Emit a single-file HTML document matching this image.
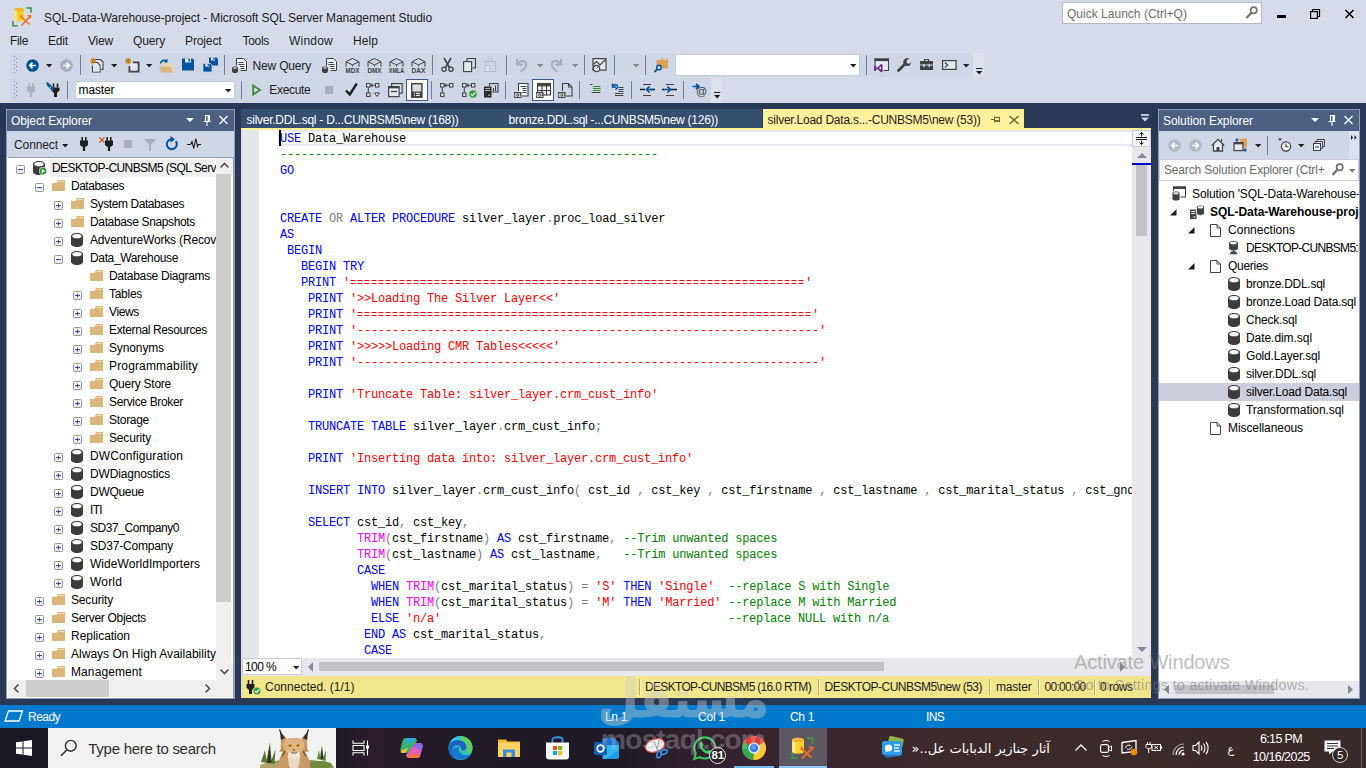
<!DOCTYPE html>
<html lang="en"><head><meta charset="utf-8"><title>SQL-Data-Warehouse-project - Microsoft SQL Server Management Studio</title>
<style>
html,body{margin:0;padding:0;width:1366px;height:768px;overflow:hidden;background:#293955;font-family:'Liberation Sans','DejaVu Sans',sans-serif;font-size:12px;}
.t{position:absolute;white-space:pre;}
#root{position:relative;width:1366px;height:768px;overflow:hidden;}
svg{overflow:visible}
</style></head><body><div id="root">
<div style="position:absolute;left:0px;top:0px;width:1366px;height:103px;background:#D6DBE9;"></div>
<span class="t" style="left:44px;top:10.3px;font-size:12px;line-height:17px;color:#1e1e1e;letter-spacing:-0.089px;">SQL-Data-Warehouse-project - Microsoft SQL Server Management Studio</span>
<div style="position:absolute;left:1062px;top:2px;width:200px;height:22px;background:#fff;border:1px solid #B2B9CD;box-sizing:border-box;"></div>
<span class="t" style="left:1067px;top:6.3px;font-size:12px;line-height:17px;color:#6d6d6d;letter-spacing:0.013px;">Quick Launch (Ctrl+Q)</span>
<span class="t" style="left:10px;top:33.2px;font-size:12px;line-height:17px;color:#1e1e1e;letter-spacing:-0.336px;">File</span>
<span class="t" style="left:48px;top:33.2px;font-size:12px;line-height:17px;color:#1e1e1e;letter-spacing:-0.172px;">Edit</span>
<span class="t" style="left:88px;top:33.2px;font-size:12px;line-height:17px;color:#1e1e1e;letter-spacing:-0.199px;">View</span>
<span class="t" style="left:133px;top:33.2px;font-size:12px;line-height:17px;color:#1e1e1e;letter-spacing:-0.138px;">Query</span>
<span class="t" style="left:185px;top:33.2px;font-size:12px;line-height:17px;color:#1e1e1e;letter-spacing:-0.123px;">Project</span>
<span class="t" style="left:242.5px;top:33.2px;font-size:12px;line-height:17px;color:#1e1e1e;letter-spacing:-0.303px;">Tools</span>
<span class="t" style="left:289px;top:33.2px;font-size:12px;line-height:17px;color:#1e1e1e;letter-spacing:0.219px;">Window</span>
<span class="t" style="left:353px;top:33.2px;font-size:12px;line-height:17px;color:#1e1e1e;letter-spacing:0.078px;">Help</span>
<div style="position:absolute;left:10px;top:53px;width:963px;height:24px;background:#CFD6E5;"></div>
<div style="position:absolute;left:973px;top:53px;width:11px;height:24px;background:#DDE1EC;"></div>
<div style="position:absolute;left:10px;top:78px;width:701px;height:25px;background:#CFD6E5;"></div>
<div style="position:absolute;left:711px;top:78px;width:11px;height:25px;background:#DDE1EC;"></div>
<div style="position:absolute;left:0px;top:103px;width:1366px;height:602px;background:#293955;"></div>
<div style="position:absolute;left:6px;top:109px;width:229px;height:590px;background:#fff;border:1px solid #8E9BBC;box-sizing:border-box;"></div>
<div style="position:absolute;left:7px;top:110px;width:227px;height:21px;background:#4D6082;"></div>
<span class="t" style="left:11px;top:112.8px;font-size:12px;line-height:17px;color:#fff;letter-spacing:-0.114px;">Object Explorer</span>
<div style="position:absolute;left:7px;top:131px;width:227px;height:26px;background:#CFD6E5;"></div>
<span class="t" style="left:14px;top:136.8px;font-size:12px;line-height:17px;color:#1e1e1e;letter-spacing:-0.100px;">Connect</span>
<div style="position:absolute;left:241px;top:128px;width:910px;height:2px;background:#FFF29D;"></div>
<div style="position:absolute;left:241px;top:109px;width:521px;height:19px;background:#364E6F;"></div>
<span class="t" style="left:246.5px;top:111.8px;font-size:12px;line-height:17px;color:#fff;letter-spacing:-0.258px;">silver.DDL.sql - D...CUNBSM5\new (168))</span>
<span class="t" style="left:508.5px;top:111.8px;font-size:12px;line-height:17px;color:#fff;letter-spacing:-0.268px;">bronze.DDL.sql -...CUNBSM5\new (126))</span>
<div style="position:absolute;left:763px;top:109px;width:261px;height:19px;background:#FFF29D;"></div>
<span class="t" style="left:767.5px;top:111.8px;font-size:12px;line-height:17px;color:#1e1e1e;letter-spacing:-0.233px;">silver.Load Data.s...-CUNBSM5\new (53))</span>
<div style="position:absolute;left:241px;top:130px;width:910px;height:568px;background:#fff;"></div>
<div style="position:absolute;left:241px;top:130px;width:1px;height:568px;background:#D3D9E8;"></div>
<div style="position:absolute;left:242px;top:130px;width:17px;height:528px;background:#E6E7E8;"></div>
<div style="position:absolute;left:242px;top:676px;width:909px;height:22px;background:#F0E68C;"></div>
<div style="position:absolute;left:242px;top:658px;width:909px;height:18px;background:#E8E8EC;"></div>
<div style="position:absolute;left:1132px;top:130px;width:19px;height:528px;background:#E8E8EC;"></div>
<div style="position:absolute;left:1158px;top:109px;width:202px;height:590px;background:#fff;border:1px solid #8E9BBC;box-sizing:border-box;"></div>
<div style="position:absolute;left:1159px;top:110px;width:200px;height:21px;background:#4D6082;"></div>
<span class="t" style="left:1163px;top:112.8px;font-size:12px;line-height:17px;color:#fff;letter-spacing:-0.082px;">Solution Explorer</span>
<div style="position:absolute;left:1159px;top:131px;width:200px;height:26px;background:#CFD6E5;"></div>
<div style="position:absolute;left:0px;top:705px;width:1366px;height:23px;background:#007ACC;"></div>
<span class="t" style="left:28px;top:708.8px;font-size:12px;line-height:17px;color:#fff;letter-spacing:-0.537px;">Ready</span>
<span class="t" style="left:605px;top:708.8px;font-size:12px;line-height:17px;color:#fff;letter-spacing:-0.340px;">Ln 1</span>
<span class="t" style="left:698px;top:708.8px;font-size:12px;line-height:17px;color:#fff;letter-spacing:-0.203px;">Col 1</span>
<span class="t" style="left:790px;top:708.8px;font-size:12px;line-height:17px;color:#fff;letter-spacing:-0.340px;">Ch 1</span>
<span class="t" style="left:926px;top:708.8px;font-size:12px;line-height:17px;color:#fff;letter-spacing:-0.672px;">INS</span>
<div style="position:absolute;left:0px;top:728px;width:1366px;height:40px;background:linear-gradient(90deg,#1B1722 0,#1D1824 24%,#2A1C2B 27%,#221A27 33%,#1F1A25 45%,#33212F 52%,#3A2630 58%,#3C2A2C 70%,#3A2A28 85%,#38292A 100%);"></div>
<div style="position:absolute;left:48px;top:728px;width:288px;height:40px;background:#F2F2F2;"></div>
<svg style="position:absolute;left:16px;top:740px;" width="16" height="16" viewBox="0 0 16 16"><path d="M0 2.300l6.500-0.900v6.100h-6.500zM7.500 1.300l8.500-1.300v7.500h-8.500zM0 8.500h6.500v6.100l-6.500-0.900zM7.500 8.500h8.500v7.500l-8.500-1.300z" fill="#fff"/></svg>
<svg style="position:absolute;left:60px;top:739px;" width="18" height="18" viewBox="0 0 18 18"><circle cx="10.800" cy="6.800" r="5.400" fill="none" stroke="#2b2b2b" stroke-width="1.400"/><path d="M7 10.700l-6 6" stroke="#2b2b2b" stroke-width="1.400"/></svg>
<span class="t" style="left:88.3px;top:737.6px;font-size:15px;line-height:21px;color:#2f2f2f;letter-spacing:-0.267px;">Type here to search</span>
<svg style="position:absolute;left:258px;top:729px;" width="78" height="39" viewBox="0 0 78 39"><ellipse cx="39" cy="38.500" rx="37" ry="8" fill="#8C9A50"/><ellipse cx="16" cy="37" rx="14" ry="3.500" fill="#B5A468"/><ellipse cx="62" cy="36" rx="12" ry="4" fill="#6F8A3C"/><path d="M3 33l4-12l1.500 10l3.500-18l1.500 18l4-11l-1 15z" fill="#5C7436"/><path d="M9 34l2.500-17l2 17z" fill="#2F3A22"/><path d="M59 30l2-9l1 7l2-12l1.500 12l2.500-7l-0.500 11z" fill="#66803A"/><path d="M62.500 30l1.200-11l1.800 11z" fill="#2F3A22"/><path d="M21 39c-1-7 1-12 4-15c-2-2-3-6-2-10l-1-12l7 8c3-1.500 11-1.500 14 0l7-8l-1 12c1 4 0 8-2 10c3 3 6 8 5 15z" fill="#C99A66"/><path d="M22 2l1 9l4-2zM50 2l-1 9l-4-2z" fill="#3a2a22"/><path d="M21.500 0.500l1.500 4M50.500 0.500l-1.500 4" stroke="#2a2020" stroke-width="1.200"/><path d="M27 11c3-2.500 15-2.500 18 0c2.500 5 1 10-3 13c-3 2-9 2-12 0c-4-3-5.500-8-3-13z" fill="#DDB582"/><path d="M24 18l-3 5l4-1zM48 18l3 5l-4-1z" fill="#B48552"/><path d="M31 22c2 3 8 3 10 0l1.500 6c-3 3-10 3-13 0z" fill="#F3E7D6"/><path d="M30 28c0 5 1 8 2 11h8c1-3 2-6 2-11c-4 2-8 2-12 0z" fill="#EBD9C2"/><ellipse cx="32" cy="16.500" rx="2" ry="1.200" fill="#D98F1E"/><ellipse cx="40" cy="16.500" rx="2" ry="1.200" fill="#D98F1E"/><circle cx="32" cy="16.500" r="0.700" fill="#222"/><circle cx="40" cy="16.500" r="0.700" fill="#222"/><path d="M34.500 20.500h3l-1.500 1.600z" fill="#5a3a2a"/><path d="M33 23.500c1.500 1 4.500 1 6 0" fill="none" stroke="#5a3a2a" stroke-width="0.700"/><path d="M27 22l-3 5M45 22l3 5" stroke="#8A6038" stroke-width="1.800"/></svg>
<svg style="position:absolute;left:352px;top:740px;" width="17" height="16" viewBox="0 0 17 16"><path d="M1 0.500v2.700h11v-2.700M1 15.500v-2.700h11v2.700" fill="none" stroke="#fff" stroke-width="1.100"/><rect x="1" y="5.500" width="11" height="5" fill="none" stroke="#fff" stroke-width="1.100"/><path d="M15.500 0.500v15" stroke="#fff" stroke-width="1.100"/><rect x="14" y="5.500" width="3" height="3" fill="#fff"/></svg>
<svg style="position:absolute;left:400px;top:737px;" width="23" height="22" viewBox="0 0 23 22"><path d="M5.500 1h8c2 0 3 1 3.500 3l-7 9c-1 2-2 3-4 3h-2.500c-2.500 0-3.500-2-3-4l2-8c0.500-2 1.500-3 3-3z" fill="#38B36B"/><path d="M5.500 1h8c1.500 0 2.500 0.600 3.100 1.800l-11.500 4.500l0.900-3.300c0.500-2 1.500-3 3-3z" fill="#2AA7E8"/><path d="M1.200 13.500l7-2.500l-1.200 2c-1 2-2 3-4 3h-1c-1.200-0.300-1.500-1.300-0.800-2.500z" fill="#F2C12E"/><path d="M17.500 21h-8c-2 0-3-1-3.500-3l7-9c1-2 2-3 4-3h2.500c2.500 0 3.500 2 3 4l-2 8c-0.500 2-1.500 3-3 3z" fill="#E262B7"/><path d="M17 6h2.500c2.500 0 3.500 2 3 4l-1 4l-8.500-5c1-2 2-3 4-3z" fill="#8A6BE8"/><path d="M6.500 19l9-2.500l4.500 2.500c-0.600 1.300-1.500 2-2.500 2h-8c-1.500 0-2.500-0.700-3-2z" fill="#F5793B"/></svg>
<svg style="position:absolute;left:448px;top:736px;" width="25" height="24" viewBox="0 0 25 24"><circle cx="12.500" cy="12" r="12" fill="#35C1B0"/><path d="M12.500 0a12 12 0 0 1 12 12c0 3-2 5-5 5l-3-9l-8-6c1.200-1.300 2.500-2 4-2z" fill="#5FCB63"/><path d="M12.500 0c-4 0-7.500 2-9.800 5l9.800 3z" fill="#35C1F1"/><path d="M0.500 12.500c0-5 4-8.500 9-8.500c5 0 9 3 9 7c0 2-1.500 3.500-3.500 3.500c-1 0-1.500-0.500-1.500-1c0-2-2-4-4.500-4c-3 0-5 2.500-5 5.500c0 4 3.500 8 8 8.500c-6 1.500-11.500-4-11.500-11z" fill="#1B64C4"/><path d="M4 15c0 5 5 9 10.500 8.500c4-0.500 7.500-3 9-6c-2 2-6 2.500-9 1c-3-1.500-4.500-4.500-3.500-7.500c-4 0-7 1.500-7 4z" fill="#1478D4"/></svg>
<svg style="position:absolute;left:498px;top:738px;" width="22" height="19" viewBox="0 0 22 19"><path d="M0 1.500h8l1.500 2h12.500v15.500h-22z" fill="#F3B72F"/><path d="M0 4.500h22v14.500h-22z" fill="#FAD366"/><path d="M5 19v-7.500h12v7.500h-3.500v-4.500h-5v4.500z" fill="#3D8BE0"/></svg>
<svg style="position:absolute;left:546px;top:736px;" width="23" height="24" viewBox="0 0 23 24"><path d="M6.500 7v-3.500c0-3 10-3 10 0v3.500" fill="none" stroke="#2E9BE6" stroke-width="1.800"/><path d="M0 6.500h23v14c0 2-1 3-3 3h-17c-2 0-3-1-3-3z" fill="#F7F7F7"/><rect x="7" y="10" width="4" height="4" fill="#F25022"/><rect x="12" y="10" width="4" height="4" fill="#7FBA00"/><rect x="7" y="15" width="4" height="4" fill="#00A4EF"/><rect x="12" y="15" width="4" height="4" fill="#FFB900"/></svg>
<svg style="position:absolute;left:594px;top:737px;" width="25" height="23" viewBox="0 0 25 23"><path d="M8 2l10-2l7 5v14l-6 3h-11z" fill="#1E6FCC"/><path d="M12 8h13v11c0 2-1 3-3 3h-13z" fill="#35B8F0"/><path d="M12 22l13-9v6c0 2-1 3-3 3z" fill="#1A9CE0"/><rect x="0" y="5" width="13" height="13" rx="1.500" fill="#0F5DB8"/><circle cx="6.500" cy="11.500" r="3.300" fill="none" stroke="#fff" stroke-width="1.800"/></svg>
<svg style="position:absolute;left:645px;top:738px;" width="23" height="21" viewBox="0 0 23 21"><ellipse cx="10" cy="7.500" rx="10" ry="6.500" fill="#F2F2F2" stroke="#D9433A" stroke-width="1.200" transform="rotate(-18 10 7.500)"/><path d="M9 3l4 10M14 2l-2 11" stroke="#9a9a9a" stroke-width="1"/><ellipse cx="14" cy="16.500" rx="2" ry="3.500" fill="none" stroke="#2D8FE8" stroke-width="1.600" transform="rotate(20 14 16.500)"/><ellipse cx="19" cy="14" rx="2" ry="3.500" fill="none" stroke="#2D8FE8" stroke-width="1.600" transform="rotate(70 19 14)"/></svg>
<svg style="position:absolute;left:693px;top:736px;" width="24" height="24" viewBox="0 0 24 24"><path d="M1.200 23l1.600-5.800a10.500 10.500 0 1 1 4 3.900z" fill="none" stroke="#3CCB62" stroke-width="2"/><path d="M7.500 6.500c0.800-0.800 1.800-0.600 2.200 0.300l0.800 1.900c0.200 0.600 0 1-0.400 1.500c-0.500 0.600-0.400 1 0 1.600c0.900 1.300 2 2.200 3.400 2.900c0.500 0.200 0.900 0.200 1.300-0.300c0.500-0.600 1-0.800 1.600-0.500l1.800 0.900c0.800 0.400 0.800 1.300 0.200 2c-1.200 1.400-3 1.500-5 0.700c-3-1.200-5.300-3.500-6.500-6.300c-0.800-1.900-0.600-3.600 0.600-4.700z" fill="#3CCB62"/></svg>
<div style="position:absolute;left:709px;top:747px;width:17px;height:17px;border-radius:50%;background:#2A2326;border:1px solid #E8E8E8;box-sizing:border-box;"></div>
<span class="t" style="left:711.5px;top:747.1px;font-size:11.5px;line-height:16px;color:#fff;letter-spacing:-0.148px;font-weight:700;">81</span>
<svg style="position:absolute;left:742px;top:736px" width="24" height="24" viewBox="-12 -12 24 24"><circle r="12" fill="#E33B2E"/><path d="M0 0L-10.390 -6A12 12 0 0 0 -0.500 12z" fill="#2DA94F"/><path d="M0 0L-0.500 12A12 12 0 0 0 10.390 -6z" fill="#FCC934"/><path d="M0 -6h10.390A12 12 0 0 0 -10.390 -6z" fill="#E33B2E"/><circle r="5.600" fill="#fff"/><circle r="4.400" fill="#3D83F0"/></svg>
<div style="position:absolute;left:734px;top:766px;width:40px;height:2px;background:#76B9ED;"></div>
<div style="position:absolute;left:779px;top:728px;width:48px;height:40px;background:#5C5760;"></div>
<div style="position:absolute;left:779px;top:766px;width:48px;height:2px;background:#8CC4F0;"></div>
<svg style="position:absolute;left:791px;top:737px;" width="23" height="22" viewBox="0 0 23 22"><path d="M1 3c0-1.300 2.700-2.300 6-2.300s6 1 6 2.300v11.500c0 1.300-2.700 2.300-6 2.300s-6-1-6-2.300z" fill="#FAD02C"/><path d="M1 3v11.500c0 0.900 1.500 1.700 3.700 2.100v-12z" fill="#FCE680"/><ellipse cx="7" cy="3.100" rx="6" ry="2.200" fill="#F8B43A"/><path d="M16 1.200h5.500v5.500" fill="none" stroke="#3C9A3C" stroke-width="1.800"/><path d="M1.200 16v5h5.500" fill="none" stroke="#3C9A3C" stroke-width="1.800"/><path d="M10.500 11.500l10 9M21.500 11l-10.500 10.500" stroke="#F26B1D" stroke-width="1.900"/><path d="M9.500 12.500l1.800-3M18 10l4 0.500l-1.800 3" fill="none" stroke="#F26B1D" stroke-width="1.500"/></svg>
<svg style="position:absolute;left:881px;top:735px;" width="24" height="25" viewBox="0 0 24 25"><rect x="7" y="2" width="15" height="13" rx="2" fill="#8DB646" transform="rotate(12 14 8)"/><rect x="3" y="9" width="17" height="13" rx="2" fill="#2B6FC4" transform="rotate(-8 11 15)"/><rect x="1" y="6" width="20" height="14" rx="2.500" fill="#2E9DE8"/><circle cx="7.500" cy="13" r="3.600" fill="#fff"/><path d="M5 15l-0.800 2.500l2.800-1z" fill="#fff"/><path d="M13 10h6M13 13h5M13 16h6" stroke="#DDF1FF" stroke-width="1.300"/></svg>
<span class="t" dir="rtl" style="left:911.500px;top:738.500px;font-size:13px;line-height:20px;color:#fff;font-family:'DejaVu Sans','Liberation Sans',sans-serif;">آثار جنازير الدبابات عل..«</span>
<svg style="position:absolute;left:1075px;top:744px;" width="12" height="7" viewBox="0 0 12 7"><path d="M0.500 6.500l5.500-5.500l5.500 5.500" fill="none" stroke="#fff" stroke-width="1.300"/></svg>
<svg style="position:absolute;left:1100px;top:740px;" width="12" height="17" viewBox="0 0 12 17"><path d="M2.500 1.500c1.500-1.300 5.500-1.300 7 0M2.500 15.500c1.500 1.300 5.500 1.300 7 0" fill="none" stroke="#fff" stroke-width="1"/><rect x="0.600" y="4.600" width="7.800" height="7.800" rx="1.500" fill="none" stroke="#fff" stroke-width="1.100"/><path d="M8.500 7.500l3-1.500v5l-3-1.500" fill="none" stroke="#fff" stroke-width="1"/></svg>
<svg style="position:absolute;left:1121px;top:740px;" width="17" height="16" viewBox="0 0 17 16"><path d="M1 2.500l14-2v11l-14 1.500z" fill="none" stroke="#fff" stroke-width="1.300"/><path d="M4.500 8c0.500-2.500 3-3.500 5-2.500M11 6.500c-0.500 2.500-3 3.500-5 2.500" fill="none" stroke="#fff" stroke-width="1"/><circle cx="13" cy="12" r="3.300" fill="#F08A1C"/></svg>
<svg style="position:absolute;left:1145px;top:742px;" width="17" height="11" viewBox="0 0 17 11"><path d="M2.500 0v2.500M5 0v2.500M1 2.500h5.500v2c0 1.500-1 2.300-2.700 2.300s-2.800-0.800-2.800-2.300zM3.700 7v4" fill="none" stroke="#fff" stroke-width="1"/><rect x="7" y="2.500" width="8.500" height="6" fill="none" stroke="#fff" stroke-width="1"/><path d="M15.500 4.500h1.200v2h-1.200M9.500 4l3.500 3M13 4l-3.500 3" fill="none" stroke="#fff" stroke-width="1"/></svg>
<svg style="position:absolute;left:1172px;top:743px;" width="13" height="13" viewBox="0 0 13 13"><path d="M1 12a11 11 0 0 1 11-11" fill="none" stroke="#9a9090" stroke-width="1.200"/><path d="M4 12a8 8 0 0 1 8-8" fill="none" stroke="#fff" stroke-width="1.200"/><path d="M7 12a5 5 0 0 1 5-5" fill="none" stroke="#fff" stroke-width="1.200"/><circle cx="11" cy="11" r="1.600" fill="#fff"/></svg>
<svg style="position:absolute;left:1192px;top:741px;" width="18" height="14" viewBox="0 0 18 14"><path d="M1 4.500h2.500l3.500-3.500v12l-3.500-3.500h-2.500z" fill="none" stroke="#fff" stroke-width="1.100"/><path d="M9 4.500c1.200 1.500 1.200 3.500 0 5M11.500 2.500c2 2.500 2 6.500 0 9M14 0.800c2.800 3.500 2.800 9 0 12.400" fill="none" stroke="#fff" stroke-width="1.100"/></svg>
<span class="t" style="left:1227.500px;top:741px;font-size:11px;line-height:18px;color:#fff;font-family:'DejaVu Sans',sans-serif;">ع</span>
<span class="t" style="left:1260px;top:730.0px;font-size:12.5px;line-height:18px;color:#fff;letter-spacing:-0.652px;">6:15 PM</span>
<span class="t" style="left:1252.7px;top:748.0px;font-size:12.5px;line-height:18px;color:#fff;letter-spacing:-0.556px;">10/16/2025</span>
<svg style="position:absolute;left:1324px;top:740px;" width="17" height="15" viewBox="0 0 17 15"><path d="M0.500 0.500h16v11h-8l-3.500 3v-3h-4.500z" fill="#fff"/><path d="M3 3.500h11M3 6h11M3 8.500h7" stroke="#3A2A28" stroke-width="1"/></svg>
<div style="position:absolute;left:1332px;top:747px;width:16px;height:16px;border-radius:50%;background:#342728;border:1px solid #CFCFCF;box-sizing:border-box;"></div>
<span class="t" style="left:1337px;top:747.0px;font-size:11.5px;line-height:16px;color:#fff;">5</span>
<div style="position:absolute;left:1361px;top:728px;width:1px;height:40px;background:#6a5c5c;"></div>
<style>.cl{position:absolute;left:21px;height:16px;line-height:16px;white-space:pre;font-family:'Liberation Mono','DejaVu Sans Mono',monospace;font-size:12px;letter-spacing:-0.2px;}.eq{font-size:10px;letter-spacing:1px;position:relative;top:-0.500px}</style>
<div style="position:absolute;left:259px;top:130px;width:873px;height:528px;overflow:hidden;background:#fff;"><div style="position:absolute;left:19px;top:0;width:854px;height:16px;border:2px solid #E8E8F3;box-sizing:border-box;border-right:0"></div><div style="position:absolute;left:0;top:-130px;"><div class="cl" style="top:131px"><span style="color:#0000FF">USE</span><span style="color:#000000"> Data_Warehouse</span></div><div class="cl" style="top:147px"><span style="color:#008000">------------------------------------------------------</span></div><div class="cl" style="top:163px"><span style="color:#0000FF">GO</span></div><div class="cl" style="top:211px"><span style="color:#0000FF">CREATE</span><span style="color:#000000"> </span><span style="color:#808080">OR</span><span style="color:#000000"> </span><span style="color:#0000FF">ALTER</span><span style="color:#000000"> </span><span style="color:#0000FF">PROCEDURE</span><span style="color:#000000"> silver_layer</span><span style="color:#808080">.</span><span style="color:#000000">proc_load_silver</span></div><div class="cl" style="top:227px"><span style="color:#0000FF">AS</span></div><div class="cl" style="top:243px"><span style="color:#0000FF"> BEGIN</span></div><div class="cl" style="top:259px"><span style="color:#0000FF">   BEGIN</span><span style="color:#000000"> </span><span style="color:#0000FF">TRY</span></div><div class="cl" style="top:275px"><span style="color:#0000FF">   PRINT</span><span style="color:#FF0000"> &#x27;<span class="eq">=================================================================</span>&#x27;</span></div><div class="cl" style="top:291px"><span style="color:#0000FF">    PRINT</span><span style="color:#FF0000"> &#x27;&gt;&gt;Loading The Silver Layer&lt;&lt;&#x27;</span></div><div class="cl" style="top:307px"><span style="color:#0000FF">    PRINT</span><span style="color:#FF0000"> &#x27;<span class="eq">=================================================================</span>&#x27;</span></div><div class="cl" style="top:323px"><span style="color:#0000FF">    PRINT</span><span style="color:#FF0000"> &#x27;------------------------------------------------------------------&#x27;</span></div><div class="cl" style="top:339px"><span style="color:#0000FF">    PRINT</span><span style="color:#FF0000"> &#x27;&gt;&gt;&gt;&gt;&gt;Loading CMR Tables&lt;&lt;&lt;&lt;&lt;&#x27;</span></div><div class="cl" style="top:355px"><span style="color:#0000FF">    PRINT</span><span style="color:#FF0000"> &#x27;------------------------------------------------------------------&#x27;</span></div><div class="cl" style="top:387px"><span style="color:#0000FF">    PRINT</span><span style="color:#FF0000"> &#x27;Truncate Table: silver_layer.crm_cust_info&#x27;</span></div><div class="cl" style="top:419px"><span style="color:#0000FF">    TRUNCATE</span><span style="color:#000000"> </span><span style="color:#0000FF">TABLE</span><span style="color:#000000"> silver_layer</span><span style="color:#808080">.</span><span style="color:#000000">crm_cust_info</span><span style="color:#808080">;</span></div><div class="cl" style="top:451px"><span style="color:#0000FF">    PRINT</span><span style="color:#FF0000"> &#x27;Inserting data into: silver_layer.crm_cust_info&#x27;</span></div><div class="cl" style="top:483px"><span style="color:#0000FF">    INSERT</span><span style="color:#000000"> </span><span style="color:#0000FF">INTO</span><span style="color:#000000"> silver_layer</span><span style="color:#808080">.</span><span style="color:#000000">crm_cust_info</span><span style="color:#808080">(</span><span style="color:#000000"> cst_id </span><span style="color:#808080">,</span><span style="color:#000000"> cst_key </span><span style="color:#808080">,</span><span style="color:#000000"> cst_firstname </span><span style="color:#808080">,</span><span style="color:#000000"> cst_lastname </span><span style="color:#808080">,</span><span style="color:#000000"> cst_marital_status </span><span style="color:#808080">,</span><span style="color:#000000"> cst_gndr </span><span style="color:#808080">,</span><span style="color:#000000"> cst_create_date</span><span style="color:#808080">)</span></div><div class="cl" style="top:515px"><span style="color:#0000FF">    SELECT</span><span style="color:#000000"> cst_id</span><span style="color:#808080">,</span><span style="color:#000000"> cst_key</span><span style="color:#808080">,</span></div><div class="cl" style="top:531px"><span style="color:#FF00FF">           TRIM</span><span style="color:#808080">(</span><span style="color:#000000">cst_firstname</span><span style="color:#808080">)</span><span style="color:#000000"> </span><span style="color:#0000FF">AS</span><span style="color:#000000"> cst_firstname</span><span style="color:#808080">,</span><span style="color:#008000"> --Trim unwanted spaces</span></div><div class="cl" style="top:547px"><span style="color:#FF00FF">           TRIM</span><span style="color:#808080">(</span><span style="color:#000000">cst_lastname</span><span style="color:#808080">)</span><span style="color:#000000"> </span><span style="color:#0000FF">AS</span><span style="color:#000000"> cst_lastname</span><span style="color:#808080">,</span><span style="color:#008000">   --Trim unwanted spaces</span></div><div class="cl" style="top:563px"><span style="color:#0000FF">           CASE</span></div><div class="cl" style="top:579px"><span style="color:#0000FF">             WHEN</span><span style="color:#000000"> </span><span style="color:#FF00FF">TRIM</span><span style="color:#808080">(</span><span style="color:#000000">cst_marital_status</span><span style="color:#808080">)</span><span style="color:#000000"> </span><span style="color:#808080">=</span><span style="color:#FF0000"> &#x27;S&#x27;</span><span style="color:#000000"> </span><span style="color:#0000FF">THEN</span><span style="color:#FF0000"> &#x27;Single&#x27;</span><span style="color:#008000">  --replace S with Single</span></div><div class="cl" style="top:595px"><span style="color:#0000FF">             WHEN</span><span style="color:#000000"> </span><span style="color:#FF00FF">TRIM</span><span style="color:#808080">(</span><span style="color:#000000">cst_marital_status</span><span style="color:#808080">)</span><span style="color:#000000"> </span><span style="color:#808080">=</span><span style="color:#FF0000"> &#x27;M&#x27;</span><span style="color:#000000"> </span><span style="color:#0000FF">THEN</span><span style="color:#FF0000"> &#x27;Married&#x27;</span><span style="color:#008000"> --replace M with Married</span></div><div class="cl" style="top:611px"><span style="color:#0000FF">             ELSE</span><span style="color:#FF0000"> &#x27;n/a&#x27;</span><span style="color:#008000">                                         --replace NULL with n/a</span></div><div class="cl" style="top:627px"><span style="color:#0000FF">            END</span><span style="color:#000000"> </span><span style="color:#0000FF">AS</span><span style="color:#000000"> cst_marital_status</span><span style="color:#808080">,</span></div><div class="cl" style="top:643px"><span style="color:#0000FF">            CASE</span></div></div><div style="position:absolute;left:20px;top:0px;width:2px;height:16px;background:#000"></div></div>
<div style="position:absolute;left:8px;top:157px;width:208px;height:523px;background:#fff;"></div>
<div style="position:absolute;left:50px;top:159px;width:165px;height:18px;background:#EFEFEF;"></div>
<div style="position:absolute;left:8px;top:157px;width:208px;height:523px;overflow:hidden;"><svg style="position:absolute;left:8px;top:8px;" width="9" height="9" viewBox="0 0 9 9"><rect x="0.5" y="0.5" width="8" height="8" rx="1" fill="#fdfdfd" stroke="#969696"/><rect x="1" y="5" width="7" height="3" fill="#e9e9ee"/><path d="M2 4.5h5" stroke="#3B4DA0" stroke-width="1"/></svg><svg style="position:absolute;left:25px;top:4px;" width="12" height="14" viewBox="0 0 12 14"><path d="M0 3.2C0 1.4 2.7 0 6 0s6 1.4 6 3.2v7.6C12 12.6 9.3 14 6 14s-6-1.4-6-3.2z" fill="#3C3C3C"/><ellipse cx="6" cy="3.2" rx="4.6" ry="2.1" fill="#fff"/></svg><svg style="position:absolute;left:31px;top:10px;" width="8" height="8" viewBox="0 0 8 8"><circle cx="4" cy="4" r="4" fill="#fff"/><circle cx="4" cy="4" r="3.5" fill="#339933"/><path d="M2.8 2v4l3.4-2z" fill="#fff"/></svg><span class="t" style="left:44px;top:2.8px;font-size:12px;line-height:17px;color:#000;letter-spacing:-0.589px;">DESKTOP-CUNBSM5 (SQL Server 16.0.1000.6 - DESKTOP-CUNBSM5\new)</span><svg style="position:absolute;left:27px;top:26px;" width="9" height="9" viewBox="0 0 9 9"><rect x="0.5" y="0.5" width="8" height="8" rx="1" fill="#fdfdfd" stroke="#969696"/><rect x="1" y="5" width="7" height="3" fill="#e9e9ee"/><path d="M2 4.5h5" stroke="#3B4DA0" stroke-width="1"/></svg><svg style="position:absolute;left:44px;top:23px;" width="13" height="11" viewBox="0 0 13 11"><path d="M0 3h4.5l1.5-3h7v11h-13z" fill="#DCB67A"/><path d="M6.5 1.5h5.5" stroke="#F1DEBB" stroke-width="1"/></svg><span class="t" style="left:63px;top:20.8px;font-size:12px;line-height:17px;color:#000;letter-spacing:-0.486px;">Databases</span><svg style="position:absolute;left:46px;top:44px;" width="9" height="9" viewBox="0 0 9 9"><rect x="0.5" y="0.5" width="8" height="8" rx="1" fill="#fdfdfd" stroke="#969696"/><rect x="1" y="5" width="7" height="3" fill="#e9e9ee"/><path d="M2 4.5h5" stroke="#3B4DA0" stroke-width="1"/><path d="M4.5 2.5v4" stroke="#3B4DA0" stroke-width="1"/></svg><svg style="position:absolute;left:63px;top:41px;" width="13" height="11" viewBox="0 0 13 11"><path d="M0 3h4.5l1.5-3h7v11h-13z" fill="#DCB67A"/><path d="M6.5 1.5h5.5" stroke="#F1DEBB" stroke-width="1"/></svg><span class="t" style="left:82px;top:38.8px;font-size:12px;line-height:17px;color:#000;letter-spacing:-0.420px;">System Databases</span><svg style="position:absolute;left:46px;top:62px;" width="9" height="9" viewBox="0 0 9 9"><rect x="0.5" y="0.5" width="8" height="8" rx="1" fill="#fdfdfd" stroke="#969696"/><rect x="1" y="5" width="7" height="3" fill="#e9e9ee"/><path d="M2 4.5h5" stroke="#3B4DA0" stroke-width="1"/><path d="M4.5 2.5v4" stroke="#3B4DA0" stroke-width="1"/></svg><svg style="position:absolute;left:63px;top:59px;" width="13" height="11" viewBox="0 0 13 11"><path d="M0 3h4.5l1.5-3h7v11h-13z" fill="#DCB67A"/><path d="M6.5 1.5h5.5" stroke="#F1DEBB" stroke-width="1"/></svg><span class="t" style="left:82px;top:56.8px;font-size:12px;line-height:17px;color:#000;letter-spacing:-0.357px;">Database Snapshots</span><svg style="position:absolute;left:46px;top:80px;" width="9" height="9" viewBox="0 0 9 9"><rect x="0.5" y="0.5" width="8" height="8" rx="1" fill="#fdfdfd" stroke="#969696"/><rect x="1" y="5" width="7" height="3" fill="#e9e9ee"/><path d="M2 4.5h5" stroke="#3B4DA0" stroke-width="1"/><path d="M4.5 2.5v4" stroke="#3B4DA0" stroke-width="1"/></svg><svg style="position:absolute;left:63px;top:76px;" width="12" height="14" viewBox="0 0 12 14"><path d="M0 3.2C0 1.4 2.7 0 6 0s6 1.4 6 3.2v7.6C12 12.6 9.3 14 6 14s-6-1.4-6-3.2z" fill="#3C3C3C"/><ellipse cx="6" cy="3.2" rx="4.6" ry="2.1" fill="#fff"/></svg><span class="t" style="left:82px;top:74.8px;font-size:12px;line-height:17px;color:#000;letter-spacing:-0.182px;">AdventureWorks (Recovery Pending)</span><svg style="position:absolute;left:46px;top:98px;" width="9" height="9" viewBox="0 0 9 9"><rect x="0.5" y="0.5" width="8" height="8" rx="1" fill="#fdfdfd" stroke="#969696"/><rect x="1" y="5" width="7" height="3" fill="#e9e9ee"/><path d="M2 4.5h5" stroke="#3B4DA0" stroke-width="1"/></svg><svg style="position:absolute;left:63px;top:94px;" width="12" height="14" viewBox="0 0 12 14"><path d="M0 3.2C0 1.4 2.7 0 6 0s6 1.4 6 3.2v7.6C12 12.6 9.3 14 6 14s-6-1.4-6-3.2z" fill="#3C3C3C"/><ellipse cx="6" cy="3.2" rx="4.6" ry="2.1" fill="#fff"/></svg><span class="t" style="left:82px;top:92.8px;font-size:12px;line-height:17px;color:#000;letter-spacing:-0.354px;">Data_Warehouse</span><svg style="position:absolute;left:82px;top:113px;" width="13" height="11" viewBox="0 0 13 11"><path d="M0 3h4.5l1.5-3h7v11h-13z" fill="#DCB67A"/><path d="M6.5 1.5h5.5" stroke="#F1DEBB" stroke-width="1"/></svg><span class="t" style="left:101px;top:110.8px;font-size:12px;line-height:17px;color:#000;letter-spacing:-0.298px;">Database Diagrams</span><svg style="position:absolute;left:65px;top:134px;" width="9" height="9" viewBox="0 0 9 9"><rect x="0.5" y="0.5" width="8" height="8" rx="1" fill="#fdfdfd" stroke="#969696"/><rect x="1" y="5" width="7" height="3" fill="#e9e9ee"/><path d="M2 4.5h5" stroke="#3B4DA0" stroke-width="1"/><path d="M4.5 2.5v4" stroke="#3B4DA0" stroke-width="1"/></svg><svg style="position:absolute;left:82px;top:131px;" width="13" height="11" viewBox="0 0 13 11"><path d="M0 3h4.5l1.5-3h7v11h-13z" fill="#DCB67A"/><path d="M6.5 1.5h5.5" stroke="#F1DEBB" stroke-width="1"/></svg><span class="t" style="left:101px;top:128.8px;font-size:12px;line-height:17px;color:#000;letter-spacing:-0.281px;">Tables</span><svg style="position:absolute;left:65px;top:152px;" width="9" height="9" viewBox="0 0 9 9"><rect x="0.5" y="0.5" width="8" height="8" rx="1" fill="#fdfdfd" stroke="#969696"/><rect x="1" y="5" width="7" height="3" fill="#e9e9ee"/><path d="M2 4.5h5" stroke="#3B4DA0" stroke-width="1"/><path d="M4.5 2.5v4" stroke="#3B4DA0" stroke-width="1"/></svg><svg style="position:absolute;left:82px;top:149px;" width="13" height="11" viewBox="0 0 13 11"><path d="M0 3h4.5l1.5-3h7v11h-13z" fill="#DCB67A"/><path d="M6.5 1.5h5.5" stroke="#F1DEBB" stroke-width="1"/></svg><span class="t" style="left:101px;top:146.8px;font-size:12px;line-height:17px;color:#000;letter-spacing:-0.359px;">Views</span><svg style="position:absolute;left:65px;top:170px;" width="9" height="9" viewBox="0 0 9 9"><rect x="0.5" y="0.5" width="8" height="8" rx="1" fill="#fdfdfd" stroke="#969696"/><rect x="1" y="5" width="7" height="3" fill="#e9e9ee"/><path d="M2 4.5h5" stroke="#3B4DA0" stroke-width="1"/><path d="M4.5 2.5v4" stroke="#3B4DA0" stroke-width="1"/></svg><svg style="position:absolute;left:82px;top:167px;" width="13" height="11" viewBox="0 0 13 11"><path d="M0 3h4.5l1.5-3h7v11h-13z" fill="#DCB67A"/><path d="M6.5 1.5h5.5" stroke="#F1DEBB" stroke-width="1"/></svg><span class="t" style="left:101px;top:164.8px;font-size:12px;line-height:17px;color:#000;letter-spacing:-0.373px;">External Resources</span><svg style="position:absolute;left:65px;top:188px;" width="9" height="9" viewBox="0 0 9 9"><rect x="0.5" y="0.5" width="8" height="8" rx="1" fill="#fdfdfd" stroke="#969696"/><rect x="1" y="5" width="7" height="3" fill="#e9e9ee"/><path d="M2 4.5h5" stroke="#3B4DA0" stroke-width="1"/><path d="M4.5 2.5v4" stroke="#3B4DA0" stroke-width="1"/></svg><svg style="position:absolute;left:82px;top:185px;" width="13" height="11" viewBox="0 0 13 11"><path d="M0 3h4.5l1.5-3h7v11h-13z" fill="#DCB67A"/><path d="M6.5 1.5h5.5" stroke="#F1DEBB" stroke-width="1"/></svg><span class="t" style="left:101px;top:182.8px;font-size:12px;line-height:17px;color:#000;letter-spacing:-0.129px;">Synonyms</span><svg style="position:absolute;left:65px;top:206px;" width="9" height="9" viewBox="0 0 9 9"><rect x="0.5" y="0.5" width="8" height="8" rx="1" fill="#fdfdfd" stroke="#969696"/><rect x="1" y="5" width="7" height="3" fill="#e9e9ee"/><path d="M2 4.5h5" stroke="#3B4DA0" stroke-width="1"/><path d="M4.5 2.5v4" stroke="#3B4DA0" stroke-width="1"/></svg><svg style="position:absolute;left:82px;top:203px;" width="13" height="11" viewBox="0 0 13 11"><path d="M0 3h4.5l1.5-3h7v11h-13z" fill="#DCB67A"/><path d="M6.5 1.5h5.5" stroke="#F1DEBB" stroke-width="1"/></svg><span class="t" style="left:101px;top:200.8px;font-size:12px;line-height:17px;color:#000;letter-spacing:0.153px;">Programmability</span><svg style="position:absolute;left:65px;top:224px;" width="9" height="9" viewBox="0 0 9 9"><rect x="0.5" y="0.5" width="8" height="8" rx="1" fill="#fdfdfd" stroke="#969696"/><rect x="1" y="5" width="7" height="3" fill="#e9e9ee"/><path d="M2 4.5h5" stroke="#3B4DA0" stroke-width="1"/><path d="M4.5 2.5v4" stroke="#3B4DA0" stroke-width="1"/></svg><svg style="position:absolute;left:82px;top:221px;" width="13" height="11" viewBox="0 0 13 11"><path d="M0 3h4.5l1.5-3h7v11h-13z" fill="#DCB67A"/><path d="M6.5 1.5h5.5" stroke="#F1DEBB" stroke-width="1"/></svg><span class="t" style="left:101px;top:218.8px;font-size:12px;line-height:17px;color:#000;letter-spacing:-0.246px;">Query Store</span><svg style="position:absolute;left:65px;top:242px;" width="9" height="9" viewBox="0 0 9 9"><rect x="0.5" y="0.5" width="8" height="8" rx="1" fill="#fdfdfd" stroke="#969696"/><rect x="1" y="5" width="7" height="3" fill="#e9e9ee"/><path d="M2 4.5h5" stroke="#3B4DA0" stroke-width="1"/><path d="M4.5 2.5v4" stroke="#3B4DA0" stroke-width="1"/></svg><svg style="position:absolute;left:82px;top:239px;" width="13" height="11" viewBox="0 0 13 11"><path d="M0 3h4.5l1.5-3h7v11h-13z" fill="#DCB67A"/><path d="M6.5 1.5h5.5" stroke="#F1DEBB" stroke-width="1"/></svg><span class="t" style="left:101px;top:236.8px;font-size:12px;line-height:17px;color:#000;letter-spacing:-0.336px;">Service Broker</span><svg style="position:absolute;left:65px;top:260px;" width="9" height="9" viewBox="0 0 9 9"><rect x="0.5" y="0.5" width="8" height="8" rx="1" fill="#fdfdfd" stroke="#969696"/><rect x="1" y="5" width="7" height="3" fill="#e9e9ee"/><path d="M2 4.5h5" stroke="#3B4DA0" stroke-width="1"/><path d="M4.5 2.5v4" stroke="#3B4DA0" stroke-width="1"/></svg><svg style="position:absolute;left:82px;top:257px;" width="13" height="11" viewBox="0 0 13 11"><path d="M0 3h4.5l1.5-3h7v11h-13z" fill="#DCB67A"/><path d="M6.5 1.5h5.5" stroke="#F1DEBB" stroke-width="1"/></svg><span class="t" style="left:101px;top:254.8px;font-size:12px;line-height:17px;color:#000;letter-spacing:-0.290px;">Storage</span><svg style="position:absolute;left:65px;top:278px;" width="9" height="9" viewBox="0 0 9 9"><rect x="0.5" y="0.5" width="8" height="8" rx="1" fill="#fdfdfd" stroke="#969696"/><rect x="1" y="5" width="7" height="3" fill="#e9e9ee"/><path d="M2 4.5h5" stroke="#3B4DA0" stroke-width="1"/><path d="M4.5 2.5v4" stroke="#3B4DA0" stroke-width="1"/></svg><svg style="position:absolute;left:82px;top:275px;" width="13" height="11" viewBox="0 0 13 11"><path d="M0 3h4.5l1.5-3h7v11h-13z" fill="#DCB67A"/><path d="M6.5 1.5h5.5" stroke="#F1DEBB" stroke-width="1"/></svg><span class="t" style="left:101px;top:272.8px;font-size:12px;line-height:17px;color:#000;letter-spacing:-0.170px;">Security</span><svg style="position:absolute;left:46px;top:296px;" width="9" height="9" viewBox="0 0 9 9"><rect x="0.5" y="0.5" width="8" height="8" rx="1" fill="#fdfdfd" stroke="#969696"/><rect x="1" y="5" width="7" height="3" fill="#e9e9ee"/><path d="M2 4.5h5" stroke="#3B4DA0" stroke-width="1"/><path d="M4.5 2.5v4" stroke="#3B4DA0" stroke-width="1"/></svg><svg style="position:absolute;left:63px;top:292px;" width="12" height="14" viewBox="0 0 12 14"><path d="M0 3.2C0 1.4 2.7 0 6 0s6 1.4 6 3.2v7.6C12 12.6 9.3 14 6 14s-6-1.4-6-3.2z" fill="#3C3C3C"/><ellipse cx="6" cy="3.2" rx="4.6" ry="2.1" fill="#fff"/></svg><span class="t" style="left:82px;top:290.8px;font-size:12px;line-height:17px;color:#000;letter-spacing:0.108px;">DWConfiguration</span><svg style="position:absolute;left:46px;top:314px;" width="9" height="9" viewBox="0 0 9 9"><rect x="0.5" y="0.5" width="8" height="8" rx="1" fill="#fdfdfd" stroke="#969696"/><rect x="1" y="5" width="7" height="3" fill="#e9e9ee"/><path d="M2 4.5h5" stroke="#3B4DA0" stroke-width="1"/><path d="M4.5 2.5v4" stroke="#3B4DA0" stroke-width="1"/></svg><svg style="position:absolute;left:63px;top:310px;" width="12" height="14" viewBox="0 0 12 14"><path d="M0 3.2C0 1.4 2.7 0 6 0s6 1.4 6 3.2v7.6C12 12.6 9.3 14 6 14s-6-1.4-6-3.2z" fill="#3C3C3C"/><ellipse cx="6" cy="3.2" rx="4.6" ry="2.1" fill="#fff"/></svg><span class="t" style="left:82px;top:308.8px;font-size:12px;line-height:17px;color:#000;letter-spacing:-0.156px;">DWDiagnostics</span><svg style="position:absolute;left:46px;top:332px;" width="9" height="9" viewBox="0 0 9 9"><rect x="0.5" y="0.5" width="8" height="8" rx="1" fill="#fdfdfd" stroke="#969696"/><rect x="1" y="5" width="7" height="3" fill="#e9e9ee"/><path d="M2 4.5h5" stroke="#3B4DA0" stroke-width="1"/><path d="M4.5 2.5v4" stroke="#3B4DA0" stroke-width="1"/></svg><svg style="position:absolute;left:63px;top:328px;" width="12" height="14" viewBox="0 0 12 14"><path d="M0 3.2C0 1.4 2.7 0 6 0s6 1.4 6 3.2v7.6C12 12.6 9.3 14 6 14s-6-1.4-6-3.2z" fill="#3C3C3C"/><ellipse cx="6" cy="3.2" rx="4.6" ry="2.1" fill="#fff"/></svg><span class="t" style="left:82px;top:326.8px;font-size:12px;line-height:17px;color:#000;letter-spacing:-0.290px;">DWQueue</span><svg style="position:absolute;left:46px;top:350px;" width="9" height="9" viewBox="0 0 9 9"><rect x="0.5" y="0.5" width="8" height="8" rx="1" fill="#fdfdfd" stroke="#969696"/><rect x="1" y="5" width="7" height="3" fill="#e9e9ee"/><path d="M2 4.5h5" stroke="#3B4DA0" stroke-width="1"/><path d="M4.5 2.5v4" stroke="#3B4DA0" stroke-width="1"/></svg><svg style="position:absolute;left:63px;top:346px;" width="12" height="14" viewBox="0 0 12 14"><path d="M0 3.2C0 1.4 2.7 0 6 0s6 1.4 6 3.2v7.6C12 12.6 9.3 14 6 14s-6-1.4-6-3.2z" fill="#3C3C3C"/><ellipse cx="6" cy="3.2" rx="4.6" ry="2.1" fill="#fff"/></svg><span class="t" style="left:82px;top:344.8px;font-size:12px;line-height:17px;color:#000;letter-spacing:-0.667px;">ITI</span><svg style="position:absolute;left:46px;top:368px;" width="9" height="9" viewBox="0 0 9 9"><rect x="0.5" y="0.5" width="8" height="8" rx="1" fill="#fdfdfd" stroke="#969696"/><rect x="1" y="5" width="7" height="3" fill="#e9e9ee"/><path d="M2 4.5h5" stroke="#3B4DA0" stroke-width="1"/><path d="M4.5 2.5v4" stroke="#3B4DA0" stroke-width="1"/></svg><svg style="position:absolute;left:63px;top:364px;" width="12" height="14" viewBox="0 0 12 14"><path d="M0 3.2C0 1.4 2.7 0 6 0s6 1.4 6 3.2v7.6C12 12.6 9.3 14 6 14s-6-1.4-6-3.2z" fill="#3C3C3C"/><ellipse cx="6" cy="3.2" rx="4.6" ry="2.1" fill="#fff"/></svg><span class="t" style="left:82px;top:362.8px;font-size:12px;line-height:17px;color:#000;letter-spacing:-0.441px;">SD37_Company0</span><svg style="position:absolute;left:46px;top:386px;" width="9" height="9" viewBox="0 0 9 9"><rect x="0.5" y="0.5" width="8" height="8" rx="1" fill="#fdfdfd" stroke="#969696"/><rect x="1" y="5" width="7" height="3" fill="#e9e9ee"/><path d="M2 4.5h5" stroke="#3B4DA0" stroke-width="1"/><path d="M4.5 2.5v4" stroke="#3B4DA0" stroke-width="1"/></svg><svg style="position:absolute;left:63px;top:382px;" width="12" height="14" viewBox="0 0 12 14"><path d="M0 3.2C0 1.4 2.7 0 6 0s6 1.4 6 3.2v7.6C12 12.6 9.3 14 6 14s-6-1.4-6-3.2z" fill="#3C3C3C"/><ellipse cx="6" cy="3.2" rx="4.6" ry="2.1" fill="#fff"/></svg><span class="t" style="left:82px;top:380.8px;font-size:12px;line-height:17px;color:#000;letter-spacing:-0.198px;">SD37-Company</span><svg style="position:absolute;left:46px;top:404px;" width="9" height="9" viewBox="0 0 9 9"><rect x="0.5" y="0.5" width="8" height="8" rx="1" fill="#fdfdfd" stroke="#969696"/><rect x="1" y="5" width="7" height="3" fill="#e9e9ee"/><path d="M2 4.5h5" stroke="#3B4DA0" stroke-width="1"/><path d="M4.5 2.5v4" stroke="#3B4DA0" stroke-width="1"/></svg><svg style="position:absolute;left:63px;top:400px;" width="12" height="14" viewBox="0 0 12 14"><path d="M0 3.2C0 1.4 2.7 0 6 0s6 1.4 6 3.2v7.6C12 12.6 9.3 14 6 14s-6-1.4-6-3.2z" fill="#3C3C3C"/><ellipse cx="6" cy="3.2" rx="4.6" ry="2.1" fill="#fff"/></svg><span class="t" style="left:82px;top:398.8px;font-size:12px;line-height:17px;color:#000;letter-spacing:0.048px;">WideWorldImporters</span><svg style="position:absolute;left:46px;top:422px;" width="9" height="9" viewBox="0 0 9 9"><rect x="0.5" y="0.5" width="8" height="8" rx="1" fill="#fdfdfd" stroke="#969696"/><rect x="1" y="5" width="7" height="3" fill="#e9e9ee"/><path d="M2 4.5h5" stroke="#3B4DA0" stroke-width="1"/><path d="M4.5 2.5v4" stroke="#3B4DA0" stroke-width="1"/></svg><svg style="position:absolute;left:63px;top:418px;" width="12" height="14" viewBox="0 0 12 14"><path d="M0 3.2C0 1.4 2.7 0 6 0s6 1.4 6 3.2v7.6C12 12.6 9.3 14 6 14s-6-1.4-6-3.2z" fill="#3C3C3C"/><ellipse cx="6" cy="3.2" rx="4.6" ry="2.1" fill="#fff"/></svg><span class="t" style="left:82px;top:416.8px;font-size:12px;line-height:17px;color:#000;letter-spacing:0.175px;">World</span><svg style="position:absolute;left:27px;top:440px;" width="9" height="9" viewBox="0 0 9 9"><rect x="0.5" y="0.5" width="8" height="8" rx="1" fill="#fdfdfd" stroke="#969696"/><rect x="1" y="5" width="7" height="3" fill="#e9e9ee"/><path d="M2 4.5h5" stroke="#3B4DA0" stroke-width="1"/><path d="M4.5 2.5v4" stroke="#3B4DA0" stroke-width="1"/></svg><svg style="position:absolute;left:44px;top:437px;" width="13" height="11" viewBox="0 0 13 11"><path d="M0 3h4.5l1.5-3h7v11h-13z" fill="#DCB67A"/><path d="M6.5 1.5h5.5" stroke="#F1DEBB" stroke-width="1"/></svg><span class="t" style="left:63px;top:434.8px;font-size:12px;line-height:17px;color:#000;letter-spacing:-0.170px;">Security</span><svg style="position:absolute;left:27px;top:458px;" width="9" height="9" viewBox="0 0 9 9"><rect x="0.5" y="0.5" width="8" height="8" rx="1" fill="#fdfdfd" stroke="#969696"/><rect x="1" y="5" width="7" height="3" fill="#e9e9ee"/><path d="M2 4.5h5" stroke="#3B4DA0" stroke-width="1"/><path d="M4.5 2.5v4" stroke="#3B4DA0" stroke-width="1"/></svg><svg style="position:absolute;left:44px;top:455px;" width="13" height="11" viewBox="0 0 13 11"><path d="M0 3h4.5l1.5-3h7v11h-13z" fill="#DCB67A"/><path d="M6.5 1.5h5.5" stroke="#F1DEBB" stroke-width="1"/></svg><span class="t" style="left:63px;top:452.8px;font-size:12px;line-height:17px;color:#000;letter-spacing:-0.311px;">Server Objects</span><svg style="position:absolute;left:27px;top:476px;" width="9" height="9" viewBox="0 0 9 9"><rect x="0.5" y="0.5" width="8" height="8" rx="1" fill="#fdfdfd" stroke="#969696"/><rect x="1" y="5" width="7" height="3" fill="#e9e9ee"/><path d="M2 4.5h5" stroke="#3B4DA0" stroke-width="1"/><path d="M4.5 2.5v4" stroke="#3B4DA0" stroke-width="1"/></svg><svg style="position:absolute;left:44px;top:473px;" width="13" height="11" viewBox="0 0 13 11"><path d="M0 3h4.5l1.5-3h7v11h-13z" fill="#DCB67A"/><path d="M6.5 1.5h5.5" stroke="#F1DEBB" stroke-width="1"/></svg><span class="t" style="left:63px;top:470.8px;font-size:12px;line-height:17px;color:#000;letter-spacing:-0.034px;">Replication</span><svg style="position:absolute;left:27px;top:494px;" width="9" height="9" viewBox="0 0 9 9"><rect x="0.5" y="0.5" width="8" height="8" rx="1" fill="#fdfdfd" stroke="#969696"/><rect x="1" y="5" width="7" height="3" fill="#e9e9ee"/><path d="M2 4.5h5" stroke="#3B4DA0" stroke-width="1"/><path d="M4.5 2.5v4" stroke="#3B4DA0" stroke-width="1"/></svg><svg style="position:absolute;left:44px;top:491px;" width="13" height="11" viewBox="0 0 13 11"><path d="M0 3h4.5l1.5-3h7v11h-13z" fill="#DCB67A"/><path d="M6.5 1.5h5.5" stroke="#F1DEBB" stroke-width="1"/></svg><span class="t" style="left:63px;top:488.8px;font-size:12px;line-height:17px;color:#000;letter-spacing:0.018px;">Always On High Availability Groups</span><svg style="position:absolute;left:27px;top:512px;" width="9" height="9" viewBox="0 0 9 9"><rect x="0.5" y="0.5" width="8" height="8" rx="1" fill="#fdfdfd" stroke="#969696"/><rect x="1" y="5" width="7" height="3" fill="#e9e9ee"/><path d="M2 4.5h5" stroke="#3B4DA0" stroke-width="1"/><path d="M4.5 2.5v4" stroke="#3B4DA0" stroke-width="1"/></svg><svg style="position:absolute;left:44px;top:509px;" width="13" height="11" viewBox="0 0 13 11"><path d="M0 3h4.5l1.5-3h7v11h-13z" fill="#DCB67A"/><path d="M6.5 1.5h5.5" stroke="#F1DEBB" stroke-width="1"/></svg><span class="t" style="left:63px;top:506.8px;font-size:12px;line-height:17px;color:#000;letter-spacing:0.095px;">Management</span></div>
<div style="position:absolute;left:216px;top:157px;width:17px;height:523px;background:#F0F0F0;"></div>
<div style="position:absolute;left:216px;top:174px;width:15px;height:428px;background:#CDCDCD;"></div>
<div style="position:absolute;left:231px;top:174px;width:2px;height:489px;background:#fff;"></div>
<div style="position:absolute;left:233px;top:157px;width:1px;height:541px;background:#9A9FAE;"></div>
<div style="position:absolute;left:8px;top:157px;width:226px;height:1px;background:#9A9FAE;"></div>
<svg style="position:absolute;left:216px;top:157px;" width="17" height="17" viewBox="0 0 17 17"><path d="M4.5 10.5l4-4 4 4" fill="none" stroke="#505050" stroke-width="1.6"/></svg>
<svg style="position:absolute;left:216px;top:663px;" width="17" height="17" viewBox="0 0 17 17"><path d="M4.5 6.5l4 4 4-4" fill="none" stroke="#505050" stroke-width="1.6"/></svg>
<div style="position:absolute;left:8px;top:680px;width:225px;height:17px;background:#F0F0F0;"></div>
<div style="position:absolute;left:26px;top:680px;width:83px;height:17px;background:#CDCDCD;"></div>
<svg style="position:absolute;left:8px;top:680px;" width="17" height="17" viewBox="0 0 17 17"><path d="M10.5 4.5l-4 4 4 4" fill="none" stroke="#505050" stroke-width="1.6"/></svg>
<svg style="position:absolute;left:199px;top:680px;" width="17" height="17" viewBox="0 0 17 17"><path d="M6.5 4.5l4 4-4 4" fill="none" stroke="#505050" stroke-width="1.6"/></svg>
<div style="position:absolute;left:1159px;top:181px;width:200px;height:500px;background:#fff;"></div>
<div style="position:absolute;left:1159px;top:383px;width:200px;height:18px;background:#CCCEDB;"></div>
<div style="position:absolute;left:1159px;top:181px;width:200px;height:498px;overflow:hidden;"><svg style="position:absolute;left:13px;top:5px;" width="15" height="15" viewBox="0 0 15 15"><rect x="1.5" y="1" width="12" height="10" fill="#fff" stroke="#424242"/><rect x="1" y="0.5" width="13" height="2.5" fill="#424242"/><path d="M0 7.2C0 6 1.7 5 4 5s4 1 4 2.200v5.6C8 14 6.300 15 4 15s-4-1-4-2.200z" fill="#424242" stroke="#fff" stroke-width="0.8"/><ellipse cx="4" cy="7.2" rx="2.900" ry="1.200" fill="#d8d8d8"/></svg><span class="t" style="left:33px;top:4.8px;font-size:12px;line-height:17px;color:#000;letter-spacing:-0.113px;">Solution &#x27;SQL-Data-Warehouse-project&#x27; (1 project)</span><svg style="position:absolute;left:11px;top:27.5px;" width="6.5" height="6.5" viewBox="0 0 6.5 6.5"><path d="M6.500 0v6.500h-6.500z" fill="#1e1e1e"/></svg><svg style="position:absolute;left:31px;top:24px;" width="15" height="14" viewBox="0 0 15 14"><rect x="0" y="4.500" width="6.500" height="9.500" fill="#424242"/><path d="M1.200 6.500h4M1.200 8.500h4" stroke="#fff" stroke-width="0.9"/><rect x="3.500" y="11.300" width="1.800" height="1.200" fill="#fff"/><path d="M6.500 2.200C6.500 1 8.200 0 10.500 0s4 1 4 2.200v6c0 1.200-1.700 2.200-4 2.200s-4-1-4-2.200z" fill="#424242" stroke="#fff" stroke-width="0.8"/><ellipse cx="10.500" cy="2.300" rx="2.900" ry="1.300" fill="#fff"/></svg><span class="t" style="left:51px;top:22.8px;font-size:12px;line-height:17px;color:#000;letter-spacing:-0.047px;font-weight:700;">SQL-Data-Warehouse-project</span><svg style="position:absolute;left:29px;top:45.5px;" width="6.5" height="6.5" viewBox="0 0 6.5 6.5"><path d="M6.500 0v6.500h-6.500z" fill="#1e1e1e"/></svg><svg style="position:absolute;left:51px;top:43px;" width="11" height="13" viewBox="0 0 11 13"><path d="M0.5 0.5h6.5l3.5 3.5v8.5h-10z" fill="#fff" stroke="#424242"/><path d="M7 0.5v3.5h3.5" fill="none" stroke="#424242"/></svg><span class="t" style="left:69px;top:40.8px;font-size:12px;line-height:17px;color:#000;letter-spacing:0.026px;">Connections</span><svg style="position:absolute;left:70px;top:60px;" width="9" height="14" viewBox="0 0 9 14"><path d="M0 2C0 0.900 2 0 4.500 0s4.500 0.900 4.500 2v5.500c0 1.100-2 2-4.500 2s-4.500-0.900-4.500-2z" fill="#424242"/><ellipse cx="4.500" cy="2.100" rx="3.300" ry="1.300" fill="#fff"/><path d="M4.500 9v3M1 12.800h7l-1.500-2h-4z" stroke="#424242" fill="#424242" stroke-width="1"/></svg><span class="t" style="left:87px;top:58.8px;font-size:12px;line-height:17px;color:#000;letter-spacing:-0.696px;">DESKTOP-CUNBSM5:DESKTOP-CUNBSM5\new</span><svg style="position:absolute;left:29px;top:81.5px;" width="6.5" height="6.5" viewBox="0 0 6.5 6.5"><path d="M6.500 0v6.500h-6.500z" fill="#1e1e1e"/></svg><svg style="position:absolute;left:51px;top:79px;" width="11" height="13" viewBox="0 0 11 13"><path d="M0.5 0.5h6.5l3.5 3.5v8.5h-10z" fill="#fff" stroke="#424242"/><path d="M7 0.5v3.5h3.5" fill="none" stroke="#424242"/></svg><span class="t" style="left:69px;top:76.8px;font-size:12px;line-height:17px;color:#000;letter-spacing:-0.290px;">Queries</span><svg style="position:absolute;left:69px;top:96px;" width="12" height="14" viewBox="0 0 12 14"><path d="M0 3.2C0 1.4 2.7 0 6 0s6 1.4 6 3.2v7.6C12 12.6 9.3 14 6 14s-6-1.4-6-3.2z" fill="#3C3C3C"/><ellipse cx="6" cy="3.2" rx="4.6" ry="2.1" fill="#fff"/></svg><span class="t" style="left:87px;top:94.8px;font-size:12px;line-height:17px;color:#000;letter-spacing:-0.266px;">bronze.DDL.sql</span><svg style="position:absolute;left:69px;top:114px;" width="12" height="14" viewBox="0 0 12 14"><path d="M0 3.2C0 1.4 2.7 0 6 0s6 1.4 6 3.2v7.6C12 12.6 9.3 14 6 14s-6-1.4-6-3.2z" fill="#3C3C3C"/><ellipse cx="6" cy="3.2" rx="4.6" ry="2.1" fill="#fff"/></svg><span class="t" style="left:87px;top:112.8px;font-size:12px;line-height:17px;color:#000;letter-spacing:-0.204px;">bronze.Load Data.sql</span><svg style="position:absolute;left:69px;top:132px;" width="12" height="14" viewBox="0 0 12 14"><path d="M0 3.2C0 1.4 2.7 0 6 0s6 1.4 6 3.2v7.6C12 12.6 9.3 14 6 14s-6-1.4-6-3.2z" fill="#3C3C3C"/><ellipse cx="6" cy="3.2" rx="4.6" ry="2.1" fill="#fff"/></svg><span class="t" style="left:87px;top:130.8px;font-size:12px;line-height:17px;color:#000;letter-spacing:-0.188px;">Check.sql</span><svg style="position:absolute;left:69px;top:150px;" width="12" height="14" viewBox="0 0 12 14"><path d="M0 3.2C0 1.4 2.7 0 6 0s6 1.4 6 3.2v7.6C12 12.6 9.3 14 6 14s-6-1.4-6-3.2z" fill="#3C3C3C"/><ellipse cx="6" cy="3.2" rx="4.6" ry="2.1" fill="#fff"/></svg><span class="t" style="left:87px;top:148.8px;font-size:12px;line-height:17px;color:#000;letter-spacing:-0.059px;">Date.dim.sql</span><svg style="position:absolute;left:69px;top:168px;" width="12" height="14" viewBox="0 0 12 14"><path d="M0 3.2C0 1.4 2.7 0 6 0s6 1.4 6 3.2v7.6C12 12.6 9.3 14 6 14s-6-1.4-6-3.2z" fill="#3C3C3C"/><ellipse cx="6" cy="3.2" rx="4.6" ry="2.1" fill="#fff"/></svg><span class="t" style="left:87px;top:166.8px;font-size:12px;line-height:17px;color:#000;letter-spacing:-0.194px;">Gold.Layer.sql</span><svg style="position:absolute;left:69px;top:186px;" width="12" height="14" viewBox="0 0 12 14"><path d="M0 3.2C0 1.4 2.7 0 6 0s6 1.4 6 3.2v7.6C12 12.6 9.3 14 6 14s-6-1.4-6-3.2z" fill="#3C3C3C"/><ellipse cx="6" cy="3.2" rx="4.6" ry="2.1" fill="#fff"/></svg><span class="t" style="left:87px;top:184.8px;font-size:12px;line-height:17px;color:#000;letter-spacing:-0.240px;">silver.DDL.sql</span><svg style="position:absolute;left:69px;top:204px;" width="12" height="14" viewBox="0 0 12 14"><path d="M0 3.2C0 1.4 2.7 0 6 0s6 1.4 6 3.2v7.6C12 12.6 9.3 14 6 14s-6-1.4-6-3.2z" fill="#3C3C3C"/><ellipse cx="6" cy="3.2" rx="4.6" ry="2.1" fill="#fff"/></svg><span class="t" style="left:87px;top:202.8px;font-size:12px;line-height:17px;color:#000;letter-spacing:-0.187px;">silver.Load Data.sql</span><svg style="position:absolute;left:69px;top:222px;" width="12" height="14" viewBox="0 0 12 14"><path d="M0 3.2C0 1.4 2.7 0 6 0s6 1.4 6 3.2v7.6C12 12.6 9.3 14 6 14s-6-1.4-6-3.2z" fill="#3C3C3C"/><ellipse cx="6" cy="3.2" rx="4.6" ry="2.1" fill="#fff"/></svg><span class="t" style="left:87px;top:220.8px;font-size:12px;line-height:17px;color:#000;letter-spacing:-0.052px;">Transformation.sql</span><svg style="position:absolute;left:51px;top:241px;" width="11" height="13" viewBox="0 0 11 13"><path d="M0.5 0.5h6.5l3.5 3.5v8.5h-10z" fill="#fff" stroke="#424242"/><path d="M7 0.5v3.5h3.5" fill="none" stroke="#424242"/></svg><span class="t" style="left:69px;top:238.8px;font-size:12px;line-height:17px;color:#000;letter-spacing:-0.081px;">Miscellaneous</span></div>
<div style="position:absolute;left:1159px;top:681px;width:200px;height:17px;background:#E8E8EC;"></div>
<div style="position:absolute;left:1175px;top:685px;width:99px;height:9px;background:#C2C3C9;"></div>
<svg style="position:absolute;left:1158px;top:681px;" width="17" height="18" viewBox="0 0 17 18"><path d="M11 4v9l-5-4.500z" fill="#868999"/></svg>
<svg style="position:absolute;left:1342px;top:681px;" width="17" height="18" viewBox="0 0 17 18"><path d="M6 4v9l5-4.500z" fill="#868999"/></svg>
<div style="position:absolute;left:1159px;top:159px;width:200px;height:22px;background:#fff;border:1px solid #CCCEDB;box-sizing:border-box;"></div>
<span class="t" style="left:1164px;top:161.8px;font-size:12px;line-height:17px;color:#6a6a6a;letter-spacing:-0.169px;">Search Solution Explorer (Ctrl+</span>
<div style="position:absolute;left:1159px;top:131px;width:200px;height:28px;background:#CFD6E5;"></div>
<svg style="position:absolute;left:13.5px;top:56px;" width="4" height="18" viewBox="0 0 4 18"><rect x="0" y="0" width="1" height="1" fill="#7B86A3"/><rect x="2" y="2" width="1" height="1" fill="#7B86A3"/><rect x="0" y="4" width="1" height="1" fill="#7B86A3"/><rect x="2" y="6" width="1" height="1" fill="#7B86A3"/><rect x="0" y="8" width="1" height="1" fill="#7B86A3"/><rect x="2" y="10" width="1" height="1" fill="#7B86A3"/><rect x="0" y="12" width="1" height="1" fill="#7B86A3"/><rect x="2" y="14" width="1" height="1" fill="#7B86A3"/><rect x="0" y="16" width="1" height="1" fill="#7B86A3"/></svg>
<svg style="position:absolute;left:13.5px;top:81px;" width="4" height="18" viewBox="0 0 4 18"><rect x="0" y="0" width="1" height="1" fill="#7B86A3"/><rect x="2" y="2" width="1" height="1" fill="#7B86A3"/><rect x="0" y="4" width="1" height="1" fill="#7B86A3"/><rect x="2" y="6" width="1" height="1" fill="#7B86A3"/><rect x="0" y="8" width="1" height="1" fill="#7B86A3"/><rect x="2" y="10" width="1" height="1" fill="#7B86A3"/><rect x="0" y="12" width="1" height="1" fill="#7B86A3"/><rect x="2" y="14" width="1" height="1" fill="#7B86A3"/><rect x="0" y="16" width="1" height="1" fill="#7B86A3"/></svg>
<svg style="position:absolute;left:25.5px;top:58.5px;" width="13" height="13" viewBox="0 0 13 13"><circle cx="6.500" cy="6.500" r="6.300" fill="#00539C"/><path d="M9.800 6.500H4M6.500 3.700L3.700 6.500l2.800 2.800" fill="none" stroke="#fff" stroke-width="1.700"/></svg>
<svg style="position:absolute;left:45.8px;top:63.5px;" width="6.4" height="3.4" viewBox="0 0 6.4 3.4"><path d="M0 0h6.400l-3.200 3.400z" fill="#1e1e1e"/></svg>
<svg style="position:absolute;left:59.5px;top:58.5px;" width="13" height="13" viewBox="0 0 13 13"><circle cx="6.500" cy="6.500" r="6.300" fill="#A7AEBF"/><path d="M3.200 6.500H9M6.500 3.700L9.300 6.500l-2.800 2.800" fill="none" stroke="#fff" stroke-width="1.700"/></svg>
<div style="position:absolute;left:80px;top:55px;width:1px;height:20px;background:#737E99;"></div>
<svg style="position:absolute;left:90px;top:57px;" width="14" height="16" viewBox="0 0 14 16"><path d="M0.10 4.00L6.50 4.00M1.04 1.74L5.56 6.26M3.30 0.80L3.30 7.20M5.56 1.74L1.04 6.26" stroke="#C27D1A" stroke-width="1.100"/><circle cx="3.3" cy="4" r="1.300" fill="#C27D1A"/><path d="M5.500 2.500h5l2.500 2.500v7.500h-2M2.500 8.500v6.500h7.500v-7l-2.500-2.500h-2.500" fill="#E4E6F0" stroke="#424242" stroke-width="1.100"/><path d="M3 9.500v5h6.500v-6h-2.500v-2h-1" fill="#E4E6F0"/></svg>
<svg style="position:absolute;left:110.8px;top:63.5px;" width="6.4" height="3.4" viewBox="0 0 6.4 3.4"><path d="M0 0h6.400l-3.200 3.400z" fill="#1e1e1e"/></svg>
<svg style="position:absolute;left:125px;top:57px;" width="15" height="16" viewBox="0 0 15 16"><path d="M0.10 4.00L6.50 4.00M1.04 1.74L5.56 6.26M3.30 0.80L3.30 7.20M5.56 1.74L1.04 6.26" stroke="#C27D1A" stroke-width="1.100"/><circle cx="3.3" cy="4" r="1.300" fill="#C27D1A"/><path d="M4.500 9v5.500h9v-9h-5.500" fill="none" stroke="#424242" stroke-width="2"/><rect x="5.500" y="6.500" width="7" height="7" fill="#E4E6F0"/></svg>
<svg style="position:absolute;left:145.8px;top:63.5px;" width="6.4" height="3.4" viewBox="0 0 6.4 3.4"><path d="M0 0h6.400l-3.200 3.400z" fill="#1e1e1e"/></svg>
<svg style="position:absolute;left:158px;top:57px;" width="16" height="16" viewBox="0 0 16 16"><path d="M5 5.500h4.500l1.500 1.500h4v8h-10z" fill="#E8D4AE"/><path d="M1 9.500h11l3 6h-11.500z" fill="#DCB67A"/><path d="M2.500 6.500c0.500-3 3.500-4 6-2.500" fill="none" stroke="#00539C" stroke-width="1.500"/><path d="M9.500 1.500v4h-4z" fill="#00539C"/></svg>
<svg style="position:absolute;left:182px;top:58px;" width="12" height="13" viewBox="0 0 12 13"><path d="M0 0.500h10.500l1.500 1.500v10.500h-12z" fill="#00539C"/><rect x="3" y="0.500" width="6" height="4" fill="#E4E6F0"/><rect x="6.500" y="1" width="1.500" height="2.600" fill="#00539C"/></svg>
<svg style="position:absolute;left:203px;top:57px;" width="15" height="15" viewBox="0 0 15 15"><path d="M6 0.500h7.500l1.500 1.500v6.500h-9z" fill="#00539C"/><rect x="8" y="0.500" width="4" height="3" fill="#E4E6F0"/><rect x="10.300" y="0.900" width="1.200" height="2" fill="#00539C"/><path d="M0 6.500h7.500l1.500 1.500v7h-9z" fill="#00539C" stroke="#CFD6E5" stroke-width="0.800"/><rect x="2.300" y="6.800" width="4" height="2.800" fill="#E4E6F0"/><rect x="4.600" y="7" width="1.200" height="2" fill="#00539C"/></svg>
<div style="position:absolute;left:224px;top:55px;width:1px;height:20px;background:#737E99;"></div>
<svg style="position:absolute;left:232px;top:58px;" width="15" height="15" viewBox="0 0 15 15"><path d="M4.500 0.500h7l3 3v9h-6" fill="#F4F5FA" stroke="#424242" stroke-width="1"/><path d="M4.500 0.500v7" stroke="#424242"/><path d="M6.500 4.500h5M6.500 6.500h6M8 8.500h4.500M8.500 10.500h4" stroke="#424242" stroke-width="1"/><path d="M0 10c0-0.800 1.300-1.500 3-1.500s3 0.700 3 1.500v3.500c0 0.800-1.300 1.500-3 1.500s-3-0.700-3-1.500z" fill="#424242"/><ellipse cx="3" cy="10" rx="2.100" ry="0.800" fill="#d0d0d0"/></svg>
<span class="t" style="left:252.5px;top:58.2px;font-size:12px;line-height:17px;color:#1e1e1e;letter-spacing:-0.170px;">New Query</span>
<svg style="position:absolute;left:322px;top:58px;" width="15" height="15" viewBox="0 0 15 15"><path d="M4.500 0.500h7l3 3v9h-6" fill="#F4F5FA" stroke="#424242" stroke-width="1"/><path d="M4.500 0.500v7" stroke="#424242"/><path d="M6.500 4.500h5M6.500 6.500h6M8 8.500h4.500M8.500 10.500h4" stroke="#424242" stroke-width="1"/><path d="M0 10c0-0.800 1.300-1.500 3-1.500s3 0.700 3 1.500v3.500c0 0.800-1.300 1.500-3 1.500s-3-0.700-3-1.500z" fill="#424242"/><ellipse cx="3" cy="10" rx="2.100" ry="0.800" fill="#d0d0d0"/></svg>
<svg style="position:absolute;left:344.5px;top:57.5px;" width="15" height="15" viewBox="0 0 15 15"><path d="M7.500 0.500l6.500 3.200v5M7.500 0.500l-6.500 3.200v5M1 3.700l6.500 3.200l6.500-3.200M7.500 6.900v1.600" fill="none" stroke="#424242" stroke-width="1"/><text x="7.500" y="14.600" text-anchor="middle" font-family="Liberation Sans,sans-serif" font-weight="700" font-size="7" textLength="14" lengthAdjust="spacingAndGlyphs" fill="#424242">MDX</text></svg>
<svg style="position:absolute;left:366.5px;top:57.5px;" width="15" height="15" viewBox="0 0 15 15"><path d="M7.500 0.500l6.500 3.200v5M7.500 0.500l-6.500 3.200v5M1 3.700l6.500 3.200l6.500-3.200M7.500 6.900v1.600" fill="none" stroke="#424242" stroke-width="1"/><text x="7.500" y="14.600" text-anchor="middle" font-family="Liberation Sans,sans-serif" font-weight="700" font-size="7" textLength="14" lengthAdjust="spacingAndGlyphs" fill="#424242">DMX</text></svg>
<svg style="position:absolute;left:389px;top:57.5px;" width="15" height="15" viewBox="0 0 15 15"><path d="M7.500 0.500l6.500 3.200v5M7.500 0.500l-6.500 3.200v5M1 3.700l6.500 3.200l6.500-3.200M7.500 6.900v1.600" fill="none" stroke="#424242" stroke-width="1"/><text x="7.500" y="14.600" text-anchor="middle" font-family="Liberation Sans,sans-serif" font-weight="700" font-size="7" textLength="15.5" lengthAdjust="spacingAndGlyphs" fill="#424242">XMLA</text></svg>
<svg style="position:absolute;left:411px;top:57.5px;" width="15" height="15" viewBox="0 0 15 15"><path d="M7.500 0.500l6.500 3.200v5M7.500 0.500l-6.500 3.200v5M1 3.700l6.500 3.200l6.500-3.200M7.500 6.900v1.600" fill="none" stroke="#424242" stroke-width="1"/><text x="7.500" y="14.600" text-anchor="middle" font-family="Liberation Sans,sans-serif" font-weight="700" font-size="7" textLength="14" lengthAdjust="spacingAndGlyphs" fill="#424242">DAX</text></svg>
<div style="position:absolute;left:432px;top:55px;width:1px;height:20px;background:#737E99;"></div>
<svg style="position:absolute;left:441px;top:58px;" width="13" height="14" viewBox="0 0 13 14"><path d="M3 0l5.500 9.500M10 0l-5.500 9.500" stroke="#424242" stroke-width="1.500"/><circle cx="3" cy="11.300" r="2.100" fill="none" stroke="#424242" stroke-width="1.300"/><circle cx="10" cy="11.300" r="2.100" fill="none" stroke="#424242" stroke-width="1.300"/></svg>
<svg style="position:absolute;left:463px;top:58px;" width="13" height="14" viewBox="0 0 13 14"><path d="M4 3.500v-3h8.500v9.500h-3" fill="none" stroke="#424242" stroke-width="1.100"/><rect x="0.600" y="3.600" width="8" height="10" fill="#E4E6F0" stroke="#424242" stroke-width="1.100"/></svg>
<svg style="position:absolute;left:484px;top:58px;" width="13" height="14" viewBox="0 0 13 14"><path d="M4 3v-1.500c0-2 4-2 4 0v1.500M1.500 3.500h10v10h-10z" fill="none" stroke="#B9BECC" stroke-width="1.100"/><rect x="1" y="7.500" width="5" height="6" fill="#DDE1EC" stroke="#B9BECC"/></svg>
<div style="position:absolute;left:506px;top:55px;width:1px;height:20px;background:#737E99;"></div>
<svg style="position:absolute;left:515px;top:58px;" width="13" height="14" viewBox="0 0 13 14"><path d="M2 1v5.500h5.500M2.500 6c3-5 9.500-3.500 8.500 1.500c-0.500 2.500-3 4.500-5.500 6" fill="none" stroke="#A7AEBF" stroke-width="2"/></svg>
<svg style="position:absolute;left:536.8px;top:63.5px;" width="6.4" height="3.4" viewBox="0 0 6.4 3.4"><path d="M0 0h6.400l-3.200 3.400z" fill="#8A8782"/></svg>
<svg style="position:absolute;left:550px;top:58px;" width="13" height="14" viewBox="0 0 13 14"><path d="M11 1v5.500h-5.500M10.500 6c-3-5-9.500-3.500-8.500 1.500c0.500 2.500 3 4.500 5.500 6" fill="none" stroke="#A7AEBF" stroke-width="2"/></svg>
<svg style="position:absolute;left:571.8px;top:63.5px;" width="6.4" height="3.4" viewBox="0 0 6.4 3.4"><path d="M0 0h6.400l-3.200 3.400z" fill="#8A8782"/></svg>
<div style="position:absolute;left:584px;top:55px;width:1px;height:20px;background:#737E99;"></div>
<svg style="position:absolute;left:592px;top:58px;" width="15" height="14" viewBox="0 0 15 14"><rect x="1" y="0.600" width="13" height="11.500" fill="#E4E6F0" stroke="#424242" stroke-width="1.200"/><path d="M1.500 6.500l3-3l3.500 3.500l5.500-5.500" fill="none" stroke="#424242" stroke-width="1.100"/><circle cx="4.500" cy="10.500" r="3.200" fill="#E4E6F0" stroke="#424242" stroke-width="1.200"/><path d="M4.500 10.500l1.800-1.800" stroke="#424242"/></svg>
<div style="position:absolute;left:614px;top:55px;width:1px;height:20px;background:#737E99;"></div>
<svg style="position:absolute;left:632.8px;top:63.5px;" width="6.4" height="3.4" viewBox="0 0 6.4 3.4"><path d="M0 0h6.400l-3.200 3.400z" fill="#8A8782"/></svg>
<div style="position:absolute;left:645px;top:55px;width:1px;height:20px;background:#737E99;"></div>
<svg style="position:absolute;left:654px;top:58px;" width="15" height="15" viewBox="0 0 15 15"><path d="M2.500 2h4l1-1.500h6.500v10h-11.500z" fill="#DDA258"/><path d="M8.500 1.500h4.500" stroke="#F3D9B3"/><circle cx="5" cy="9.500" r="2.300" fill="#CFD6E5" stroke="#00539C" stroke-width="1.400"/><path d="M3.300 11.200l-2.800 2.800" stroke="#00539C" stroke-width="1.800"/></svg>
<div style="position:absolute;left:675px;top:54px;width:185px;height:22px;background:#fff;border:1px solid #C4CBDD;box-sizing:border-box;"></div>
<svg style="position:absolute;left:849.8px;top:63.5px;" width="6.4" height="3.4" viewBox="0 0 6.4 3.4"><path d="M0 0h6.400l-3.200 3.400z" fill="#1e1e1e"/></svg>
<div style="position:absolute;left:866px;top:55px;width:1px;height:20px;background:#737E99;"></div>
<svg style="position:absolute;left:874px;top:58px;" width="15" height="14" viewBox="0 0 15 14"><path d="M1 13V1h13.500v11.500h-5" fill="#E4E6F0" stroke="#424242" stroke-width="1.100"/><rect x="0.500" y="0.500" width="14.500" height="2.600" fill="#424242"/><path d="M1 7.500l2.500 2l3.500-3.500l1.500 0.700v7l-1.500 0.600l-3.500-3.300l-2.500 2l-0.800-0.500v-4.500zM1.700 8.800v2.500l1.200-1.200zM4.800 10l2.200 1.800v-3.600z" fill="#68217A" fill-rule="evenodd"/></svg>
<svg style="position:absolute;left:897px;top:58px;" width="15" height="14" viewBox="0 0 15 14"><path d="M1.500 12.500l7-7" stroke="#424242" stroke-width="2.800" stroke-linecap="round"/><path d="M12.500 0.800a4 4 0 1 0 1.700 3.800l-2.700 1.400l-2-1.600l0.300-2.400z" fill="#424242"/></svg>
<svg style="position:absolute;left:920px;top:59px;" width="13" height="12" viewBox="0 0 13 12"><path d="M4.500 2v-1.500h4v1.500" fill="none" stroke="#424242" stroke-width="1.200"/><rect x="0" y="2" width="13" height="9" fill="#424242"/><path d="M0 6h13" stroke="#CFD6E5" stroke-width="1"/><rect x="3" y="5" width="1.500" height="3" fill="#CFD6E5"/><rect x="8.500" y="5" width="1.500" height="3" fill="#CFD6E5"/></svg>
<svg style="position:absolute;left:941.5px;top:60px;" width="15" height="10" viewBox="0 0 15 10"><rect x="0.600" y="0.600" width="13.500" height="8.800" fill="#E4E6F0" stroke="#424242" stroke-width="1.200"/><path d="M2.800 2.500l3 2.500l-3 2.500" fill="none" stroke="#424242" stroke-width="1.100"/></svg>
<svg style="position:absolute;left:962.8px;top:63.5px;" width="6.4" height="3.4" viewBox="0 0 6.4 3.4"><path d="M0 0h6.400l-3.200 3.400z" fill="#1e1e1e"/></svg>
<svg style="position:absolute;left:975.8px;top:68px;" width="6.4" height="7" viewBox="0 0 6.4 7"><path d="M0 0.500h6.400" stroke="#1e1e1e" stroke-width="1"/><path d="M0 3h6.400l-3.200 3.400z" fill="#1e1e1e"/></svg>
<svg style="position:absolute;left:26.5px;top:83px;" width="8" height="14" viewBox="0 0 8 14"><rect x="1.400" y="0" width="1.600" height="4" fill="#ABB0BE"/><rect x="5" y="0" width="1.600" height="4" fill="#ABB0BE"/><path d="M0 3.600h8v4.400l-2 1.800h-0.900v4.200h-2.200v-4.200h-0.900l-2-1.800z" fill="#ABB0BE"/></svg>
<svg style="position:absolute;left:46px;top:82px;" width="14" height="15" viewBox="0 0 14 15"><path d="M7.500 1.500v4M11.500 1.500v4" stroke="#1e1e1e" stroke-width="1.600"/><path d="M5.500 5.500h8v3l-2.500 2.500v4h-3v-4l-2.500-2.500z" fill="#1e1e1e"/><path d="M1.500 2l6 6" stroke="#00539C" stroke-width="3"/><path d="M0 0l3 1l-2 2z" fill="#00539C"/><path d="M3.500 4.500l1.500 1.500" stroke="#9cc3ee" stroke-width="1"/></svg>
<div style="position:absolute;left:67px;top:81px;width:1px;height:18px;background:#737E99;"></div>
<div style="position:absolute;left:75px;top:81px;width:160px;height:18px;background:#fff;border:1px solid #C4CBDD;box-sizing:border-box;"></div>
<span class="t" style="left:78.5px;top:82.1px;font-size:12px;line-height:17px;color:#000;letter-spacing:-0.115px;">master</span>
<svg style="position:absolute;left:224.8px;top:88.5px;" width="6.4" height="3.4" viewBox="0 0 6.4 3.4"><path d="M0 0h6.400l-3.200 3.400z" fill="#1e1e1e"/></svg>
<div style="position:absolute;left:241px;top:81px;width:1px;height:18px;background:#737E99;"></div>
<svg style="position:absolute;left:252px;top:84px;" width="9" height="12" viewBox="0 0 9 12"><path d="M1.200 1.500v9l6.800-4.500z" fill="none" stroke="#388A34" stroke-width="1.800"/></svg>
<span class="t" style="left:269.3px;top:81.6px;font-size:12px;line-height:17px;color:#1e1e1e;letter-spacing:-0.337px;">Execute</span>
<div style="position:absolute;left:325px;top:86px;width:8px;height:8px;background:#A9AEBD;"></div>
<svg style="position:absolute;left:344.5px;top:83px;" width="13" height="13" viewBox="0 0 13 13"><path d="M1 7.500l3.800 4l7-11" fill="none" stroke="#222" stroke-width="2.400"/></svg>
<svg style="position:absolute;left:365.5px;top:83px;" width="15" height="15" viewBox="0 0 15 15"><rect x="0.6" y="0.6" width="3.4" height="3.4" fill="#F4F5FA" stroke="#424242" stroke-width="1.100"/><rect x="9.5" y="0.6" width="3.4" height="3.4" fill="#F4F5FA" stroke="#424242" stroke-width="1.100"/><rect x="0.6" y="10" width="3.4" height="3.4" fill="#F4F5FA" stroke="#424242" stroke-width="1.100"/><path d="M9 2.300h-4.500M6.500 0.800l-1.800 1.500l1.800 1.500M2.300 4.500v5" fill="none" stroke="#424242" stroke-width="1.100"/><path d="M8.500 10h5l-2.500 3.500z" fill="#F4F5FA" stroke="#424242" stroke-width="1"/></svg>
<svg style="position:absolute;left:388px;top:83px;" width="15" height="15" viewBox="0 0 15 15"><rect x="3.600" y="0.600" width="10.500" height="9.500" fill="#E4E6F0" stroke="#424242" stroke-width="1.200"/><rect x="0.600" y="3.600" width="10.500" height="10" fill="#E4E6F0" stroke="#424242" stroke-width="1.200"/><path d="M0.600 4.500h10.500" stroke="#424242" stroke-width="1.600"/><path d="M3 8.500h6" stroke="#424242" stroke-width="1.300"/></svg>
<div style="position:absolute;left:406px;top:79px;width:22px;height:22px;background:#FDFBF3;border:1px solid #3A5A8C;box-sizing:border-box;"></div>
<svg style="position:absolute;left:411px;top:83px;" width="12" height="15" viewBox="0 0 12 15"><rect x="0.700" y="0.700" width="10.200" height="13.500" fill="#D9DCE8" stroke="#424242" stroke-width="1.400"/><rect x="0.700" y="8.500" width="10.200" height="5.700" fill="#424242"/><path d="M3 10.300h1M5 10.300h4M3 12.300h1M5 12.300h4" stroke="#fff" stroke-width="1"/></svg>
<div style="position:absolute;left:431px;top:81px;width:1px;height:18px;background:#737E99;"></div>
<svg style="position:absolute;left:439.5px;top:83px;" width="15" height="15" viewBox="0 0 15 15"><rect x="0.6" y="0.6" width="3.4" height="3.4" fill="#F4F5FA" stroke="#424242" stroke-width="1.100"/><rect x="9.5" y="0.6" width="3.4" height="3.4" fill="#F4F5FA" stroke="#424242" stroke-width="1.100"/><rect x="0.6" y="10" width="3.4" height="3.4" fill="#F4F5FA" stroke="#424242" stroke-width="1.100"/><path d="M9 2.300h-4.500M6.500 0.800l-1.800 1.500l1.800 1.500M2.300 4.500v5" fill="none" stroke="#424242" stroke-width="1.100"/></svg>
<svg style="position:absolute;left:462px;top:83px;" width="15" height="15" viewBox="0 0 15 15"><rect x="0.6" y="0.6" width="3.4" height="3.4" fill="#F4F5FA" stroke="#424242" stroke-width="1.100"/><rect x="9.5" y="0.6" width="3.4" height="3.4" fill="#F4F5FA" stroke="#424242" stroke-width="1.100"/><rect x="0.6" y="10" width="3.4" height="3.4" fill="#F4F5FA" stroke="#424242" stroke-width="1.100"/><path d="M9 2.300h-4.500M6.500 0.800l-1.800 1.500l1.800 1.500M2.300 4.500v5" fill="none" stroke="#424242" stroke-width="1.100"/><circle cx="11" cy="11" r="3.800" fill="#2FA135"/><path d="M9 11l1.500 1.600l2.800-3.200" fill="none" stroke="#fff" stroke-width="1.300"/></svg>
<svg style="position:absolute;left:484px;top:83px;" width="15" height="15" viewBox="0 0 15 15"><rect x="0" y="3.500" width="7.500" height="11" fill="#2b2b2b"/><path d="M1.200 5.500h5M1.200 7.500h5" stroke="#cfd6e5" stroke-width="0.800"/><rect x="4.500" y="11.500" width="1.500" height="1.300" fill="#cfd6e5"/><path d="M5.500 3v-2.500h8.500v8.500h-6" fill="none" stroke="#424242" stroke-width="1.100"/><path d="M9.500 8v-3M11.500 8v-5.500" stroke="#424242" stroke-width="1.100"/></svg>
<div style="position:absolute;left:505px;top:81px;width:1px;height:18px;background:#737E99;"></div>
<svg style="position:absolute;left:514px;top:83px;" width="15" height="15" viewBox="0 0 15 15"><path d="M4.500 8v-7.500h9.500v12.500h-6" fill="#F4F5FA" stroke="#424242" stroke-width="1.100"/><path d="M6.500 3.500h6M8.500 5.500h4M8.500 7.500h4M8.500 9.500h4" stroke="#424242" stroke-width="1"/><rect x="0" y="9.0" width="7.500" height="6" fill="#424242"/><text x="3.75" y="14.2" text-anchor="middle" font-family="Liberation Sans,sans-serif" font-weight="700" font-size="6" textLength="6.400" lengthAdjust="spacingAndGlyphs" fill="#fff">01</text></svg>
<div style="position:absolute;left:532px;top:79px;width:22px;height:22px;background:#FDFBF3;border:1px solid #3A5A8C;box-sizing:border-box;"></div>
<svg style="position:absolute;left:536px;top:83px;" width="15" height="15" viewBox="0 0 15 15"><rect x="1.500" y="0.500" width="13" height="11.500" fill="#F4F5FA" stroke="#424242" stroke-width="1.100"/><rect x="1" y="0" width="14" height="3.300" fill="#424242"/><path d="M1.500 7.500h13M6 3v9M10.500 3v9" stroke="#424242" stroke-width="1.100"/><rect x="0" y="9.0" width="7.500" height="6" fill="#424242"/><text x="3.75" y="14.2" text-anchor="middle" font-family="Liberation Sans,sans-serif" font-weight="700" font-size="6" textLength="6.400" lengthAdjust="spacingAndGlyphs" fill="#fff">01</text></svg>
<svg style="position:absolute;left:558px;top:83px;" width="15" height="15" viewBox="0 0 15 15"><path d="M4.500 8v-7.500h6l3.500 3.500v9h-6" fill="none" stroke="#424242" stroke-width="1.100"/><path d="M10.500 0.500v3.500h3.500" fill="none" stroke="#424242" stroke-width="1.100"/><rect x="0" y="9.0" width="7.500" height="6" fill="#424242"/><text x="3.75" y="14.2" text-anchor="middle" font-family="Liberation Sans,sans-serif" font-weight="700" font-size="6" textLength="6.400" lengthAdjust="spacingAndGlyphs" fill="#fff">01</text></svg>
<div style="position:absolute;left:579px;top:81px;width:1px;height:18px;background:#737E99;"></div>
<svg style="position:absolute;left:590px;top:84px;" width="11" height="11" viewBox="0 0 11 11"><path d="M0 0.500h2.500" stroke="#424242" stroke-width="1"/><path d="M3 2.500h7.500M3 4.500h7.500M3 6.500h7.500" stroke="#388A34" stroke-width="1"/><path d="M1.500 8.500h9" stroke="#424242" stroke-width="1"/></svg>
<svg style="position:absolute;left:611px;top:83px;" width="13" height="13" viewBox="0 0 13 13"><path d="M1.500 0.500v3.500h3.500M2 3.500c2-3.500 6-1.500 4 1.500l-1.500 1.800" fill="none" stroke="#00539C" stroke-width="1.500"/><path d="M7.500 4.500h5M7.500 6.500h5M7.500 8.500h5M4 10.500h8.500M4 12.500h8.500" stroke="#424242" stroke-width="1"/></svg>
<div style="position:absolute;left:631px;top:81px;width:1px;height:18px;background:#737E99;"></div>
<svg style="position:absolute;left:639.5px;top:84px;" width="15" height="12" viewBox="0 0 15 12"><path d="M3 0.500h8M3 11.500h8" stroke="#424242" stroke-width="1"/><path d="M0 5.500h5M10 5.500h5" stroke="#1e1e1e" stroke-width="1.600"/><path d="M13.500 5.500h-6.500M9.500 2.500l-3 3l3 3" fill="none" stroke="#00539C" stroke-width="1.700"/></svg>
<svg style="position:absolute;left:661.5px;top:84px;" width="15" height="12" viewBox="0 0 15 12"><path d="M4 0.500h8M4 11.500h8" stroke="#424242" stroke-width="1"/><path d="M0 5.500h2M9 5.500h6" stroke="#1e1e1e" stroke-width="1.600"/><path d="M1.500 5.500h6.500M5.500 2.500l3 3l-3 3" fill="none" stroke="#00539C" stroke-width="1.700"/></svg>
<div style="position:absolute;left:683px;top:81px;width:1px;height:18px;background:#737E99;"></div>
<svg style="position:absolute;left:691.5px;top:83px;" width="15" height="14" viewBox="0 0 15 14"><path d="M0.500 3.500h6M4 0.800l3 2.700l-3 2.700" fill="none" stroke="#00539C" stroke-width="1.700"/><text x="9.600" y="11.500" text-anchor="middle" font-family="Liberation Sans,sans-serif" font-size="11" fill="#424242">@</text></svg>
<svg style="position:absolute;left:713.8px;top:92px;" width="6.4" height="7" viewBox="0 0 6.4 7"><path d="M0 0.500h6.400" stroke="#1e1e1e" stroke-width="1"/><path d="M0 3h6.400l-3.200 3.400z" fill="#1e1e1e"/></svg>
<svg style="position:absolute;left:186px;top:118px;" width="8" height="4" viewBox="0 0 8 4"><path d="M0 0h8l-4 4z" fill="#fff"/></svg><svg style="position:absolute;left:203px;top:115px;" width="8" height="11" viewBox="0 0 8 11"><path d="M2 0.500h4.500v5.500M2.500 0.500v5.500M0.500 6.500h7M4 6.500v4.500" fill="none" stroke="#fff" stroke-width="1.100"/><path d="M5.500 1v5" stroke="#fff" stroke-width="1.800"/></svg><svg style="position:absolute;left:218.5px;top:116px;" width="9" height="8" viewBox="0 0 9 8"><path d="M0.500 0l8 8M8.500 0l-8 8" stroke="#fff" stroke-width="1.300"/></svg>
<svg style="position:absolute;left:1311px;top:118px;" width="8" height="4" viewBox="0 0 8 4"><path d="M0 0h8l-4 4z" fill="#fff"/></svg><svg style="position:absolute;left:1328px;top:115px;" width="8" height="11" viewBox="0 0 8 11"><path d="M2 0.500h4.500v5.500M2.500 0.500v5.500M0.500 6.500h7M4 6.500v4.500" fill="none" stroke="#fff" stroke-width="1.100"/><path d="M5.500 1v5" stroke="#fff" stroke-width="1.800"/></svg><svg style="position:absolute;left:1343.5px;top:116px;" width="9" height="8" viewBox="0 0 9 8"><path d="M0.500 0l8 8M8.500 0l-8 8" stroke="#fff" stroke-width="1.300"/></svg>
<svg style="position:absolute;left:61.8px;top:143.5px;" width="6.4" height="3.4" viewBox="0 0 6.4 3.4"><path d="M0 0h6.400l-3.200 3.400z" fill="#1e1e1e"/></svg>
<svg style="position:absolute;left:80px;top:137px;" width="8" height="14" viewBox="0 0 8 14"><rect x="1.400" y="0" width="1.600" height="4" fill="#1e1e1e"/><rect x="5" y="0" width="1.600" height="4" fill="#1e1e1e"/><path d="M0 3.600h8v4.400l-2 1.800h-0.900v4.200h-2.200v-4.200h-0.900l-2-1.800z" fill="#1e1e1e"/></svg>
<svg style="position:absolute;left:105px;top:137px;" width="8" height="14" viewBox="0 0 8 14"><rect x="1.400" y="0" width="1.600" height="4" fill="#1e1e1e"/><rect x="5" y="0" width="1.600" height="4" fill="#1e1e1e"/><path d="M0 3.600h8v4.400l-2 1.800h-0.900v4.200h-2.200v-4.200h-0.900l-2-1.800z" fill="#1e1e1e"/></svg>
<svg style="position:absolute;left:99px;top:137px;" width="6" height="6" viewBox="0 0 6 6"><path d="M0.500 0.500l5 5M5.500 0.500l-5 5" stroke="#D2501A" stroke-width="1.100"/></svg>
<div style="position:absolute;left:124px;top:140px;width:8px;height:8px;background:#A9AEBD;"></div>
<svg style="position:absolute;left:144px;top:139px;" width="12" height="12" viewBox="0 0 12 12"><path d="M0 0h12l-5 5.500v6.500h-2v-6.500z" fill="#A9AEBD"/></svg>
<svg style="position:absolute;left:165px;top:136px;" width="14" height="15" viewBox="0 0 14 15"><path d="M10.800 5.200a5 5 0 1 1 -4.300 -2" fill="none" stroke="#00539C" stroke-width="2"/><path d="M5.500 0l4.500 3.200l-4.500 3.200z" fill="#00539C"/></svg>
<svg style="position:absolute;left:187px;top:138px;" width="14" height="12" viewBox="0 0 14 12"><path d="M0 6.500h3.500l1.500-3l1.800 7l2-10l1.700 8l1-2h2.500" fill="none" stroke="#1e1e1e" stroke-width="1.100"/></svg>
<svg style="position:absolute;left:991px;top:116px;" width="9" height="7" viewBox="0 0 9 7"><path d="M0 3.500h3.500M3.500 0.500v6M3.500 1.500h5v3.500h-5M8.500 1v5" fill="none" stroke="#716538" stroke-width="1"/><path d="M3.500 5h5" stroke="#716538" stroke-width="1.600"/></svg>
<svg style="position:absolute;left:1009px;top:115.5px;" width="10" height="8" viewBox="0 0 10 8"><path d="M0.500 0l9 8M9.500 0l-9 8" stroke="#716538" stroke-width="1.400"/></svg>
<svg style="position:absolute;left:1141px;top:114px;" width="8" height="8" viewBox="0 0 8 8"><path d="M0 1h8" stroke="#CED4E4" stroke-width="1.800"/><path d="M0 3.500h8l-4 4z" fill="#CED4E4"/></svg>
<div style="position:absolute;left:1132px;top:130px;width:19px;height:17px;background:#F2F2F9;border:1px solid #C9CBDA;box-sizing:border-box;"></div>
<svg style="position:absolute;left:1136px;top:132px;" width="11" height="13" viewBox="0 0 11 13"><path d="M0 5.500h11M0 7.500h11" stroke="#1e1e1e" stroke-width="1"/><path d="M5.500 0.500v4M5.500 8.500v4" stroke="#1e1e1e" stroke-width="1"/><path d="M3.500 2.500l2-2l2 2M3.500 10.500l2 2l2-2" fill="none" stroke="#1e1e1e" stroke-width="1"/></svg>
<svg style="position:absolute;left:1137px;top:153px;" width="10" height="5" viewBox="0 0 10 5"><path d="M0 5h10l-5-5z" fill="#868999"/></svg>
<div style="position:absolute;left:1132px;top:163px;width:19px;height:2px;background:#0000CD;"></div>
<div style="position:absolute;left:1136px;top:165px;width:11px;height:71px;background:#C2C3C9;"></div>
<svg style="position:absolute;left:1137px;top:647px;" width="10" height="5" viewBox="0 0 10 5"><path d="M0 0h10l-5 5z" fill="#868999"/></svg>
<div style="position:absolute;left:242px;top:658px;width:60px;height:17px;background:#fff;border:1px solid #C9CBDA;box-sizing:border-box;"></div>
<span class="t" style="left:245px;top:658.5px;font-size:12px;line-height:17px;color:#000;letter-spacing:-0.606px;">100 %</span>
<svg style="position:absolute;left:292.8px;top:666.0px;" width="6.4" height="3.4" viewBox="0 0 6.4 3.4"><path d="M0 0h6.400l-3.200 3.400z" fill="#1e1e1e"/></svg>
<svg style="position:absolute;left:308px;top:662px;" width="5" height="10" viewBox="0 0 5 10"><path d="M5 0v10l-5-5z" fill="#868999"/></svg>
<div style="position:absolute;left:319px;top:662px;width:565px;height:9px;background:#C2C3C9;"></div>
<svg style="position:absolute;left:1120px;top:662px;" width="5" height="10" viewBox="0 0 5 10"><path d="M0 0v10l5-5z" fill="#868999"/></svg>
<svg style="position:absolute;left:246px;top:680px;" width="15" height="15" viewBox="0 0 15 15"><path d="M2.500 0v4M6.500 0v4" stroke="#1e1e1e" stroke-width="1.600"/><path d="M0.500 4h8v3.500l-2.500 2.500v4h-3v-4l-2.500-2.500z" fill="#1e1e1e"/><circle cx="11" cy="11" r="4" fill="#F0E68C"/><circle cx="11" cy="11" r="3.500" fill="#2FA135"/><path d="M9 11l1.500 1.600l2.700-3.100" fill="none" stroke="#fff" stroke-width="1.300"/></svg>
<span class="t" style="left:265px;top:679.2px;font-size:12px;line-height:17px;color:#1e1e1e;letter-spacing:0.007px;">Connected. (1/1)</span>
<div style="position:absolute;left:639px;top:679px;width:1px;height:16px;background:#B5AD72;"></div><div style="position:absolute;left:640px;top:679px;width:1px;height:16px;background:#FBF6C4;"></div>
<span class="t" style="left:645px;top:679.2px;font-size:12px;line-height:17px;color:#1e1e1e;letter-spacing:-0.677px;">DESKTOP-CUNBSM5 (16.0 RTM)</span>
<div style="position:absolute;left:818px;top:679px;width:1px;height:16px;background:#B5AD72;"></div><div style="position:absolute;left:819px;top:679px;width:1px;height:16px;background:#FBF6C4;"></div>
<span class="t" style="left:824.5px;top:679.2px;font-size:12px;line-height:17px;color:#1e1e1e;letter-spacing:-0.514px;">DESKTOP-CUNBSM5\new (53)</span>
<div style="position:absolute;left:989px;top:679px;width:1px;height:16px;background:#B5AD72;"></div><div style="position:absolute;left:990px;top:679px;width:1px;height:16px;background:#FBF6C4;"></div>
<span class="t" style="left:996px;top:679.2px;font-size:12px;line-height:17px;color:#1e1e1e;letter-spacing:-0.198px;">master</span>
<div style="position:absolute;left:1038px;top:679px;width:1px;height:16px;background:#B5AD72;"></div><div style="position:absolute;left:1039px;top:679px;width:1px;height:16px;background:#FBF6C4;"></div>
<span class="t" style="left:1044.5px;top:679.2px;font-size:12px;line-height:17px;color:#1e1e1e;letter-spacing:-0.715px;">00:00:00</span>
<div style="position:absolute;left:1094px;top:679px;width:1px;height:16px;background:#B5AD72;"></div><div style="position:absolute;left:1095px;top:679px;width:1px;height:16px;background:#FBF6C4;"></div>
<span class="t" style="left:1100px;top:679.2px;font-size:12px;line-height:17px;color:#1e1e1e;letter-spacing:-0.474px;">0 rows</span>
<svg style="position:absolute;left:4px;top:710px;" width="20" height="12" viewBox="0 0 20 12"><path d="M4.500 1h14l-3.500 10h-14z" fill="none" stroke="#fff" stroke-width="1.300"/></svg>
<svg style="position:absolute;left:12px;top:7px;" width="20" height="20" viewBox="0 0 20 20"><path d="M2 2.500c0-1 2.200-1.800 5-1.800s5 0.800 5 1.800v10c0 1-2.200 1.800-5 1.800s-5-0.800-5-1.800z" fill="#FAD02C"/><path d="M2 2.500v10c0 0.700 1.200 1.300 3 1.600v-10.500z" fill="#FCE680"/><ellipse cx="7" cy="2.600" rx="5" ry="1.800" fill="#F8B43A"/><path d="M14.300 1h4.700v4.700" fill="none" stroke="#3C9A3C" stroke-width="1.600"/><path d="M1 14v4.700h4.700" fill="none" stroke="#3C9A3C" stroke-width="1.600"/><path d="M9 9.500l8.500 8M18.500 9l-9 9.500" stroke="#F26B1D" stroke-width="1.500"/><path d="M8 10.500l1.500-2.500M15.500 8.500l3.500 0.500l-1.500 2.500" fill="none" stroke="#F26B1D" stroke-width="1.300"/></svg>
<svg style="position:absolute;left:1245px;top:6px;" width="13" height="13" viewBox="0 0 13 13"><circle cx="8.700" cy="4.300" r="3.100" fill="none" stroke="#717171" stroke-width="1.700"/><path d="M6.500 6.500l-5 5.500" stroke="#717171" stroke-width="2.200"/></svg>
<div style="position:absolute;left:1277px;top:15px;width:9px;height:3px;background:#000;"></div>
<svg style="position:absolute;left:1310px;top:9px;" width="10" height="10" viewBox="0 0 10 10"><path d="M2.500 2.500v-2h7v7h-2" fill="none" stroke="#000" stroke-width="1.200"/><rect x="0.600" y="2.600" width="6.800" height="6.800" fill="none" stroke="#000" stroke-width="1.200"/></svg>
<svg style="position:absolute;left:1344.5px;top:10px;" width="9" height="8" viewBox="0 0 9 8"><path d="M0.500 0l8 8M8.500 0l-8 8" stroke="#000" stroke-width="1.500"/></svg>
<svg style="position:absolute;left:1167.5px;top:138.5px;" width="13" height="13" viewBox="0 0 13 13"><circle cx="6.500" cy="6.500" r="6.300" fill="#B4B9C6"/><path d="M9.800 6.500H4M6.500 3.700L3.700 6.500l2.800 2.800" fill="none" stroke="#fff" stroke-width="1.700"/></svg>
<svg style="position:absolute;left:1189.0px;top:138.5px;" width="13" height="13" viewBox="0 0 13 13"><circle cx="6.500" cy="6.500" r="6.300" fill="#B4B9C6"/><path d="M3.200 6.500H9M6.500 3.700L9.300 6.500l-2.800 2.800" fill="none" stroke="#fff" stroke-width="1.700"/></svg>
<svg style="position:absolute;left:1211px;top:138px;" width="14" height="14" viewBox="0 0 14 14"><path d="M0.800 7.500l6.200-6.200l6.200 6.200M2.500 6.500v6.500h9v-6.500" fill="#F4F5FA" stroke="#424242" stroke-width="1.300"/><rect x="5.500" y="9" width="3" height="4" fill="#424242"/><path d="M10.500 1v3" stroke="#424242" stroke-width="1.200"/></svg>
<svg style="position:absolute;left:1233px;top:138px;" width="15" height="14" viewBox="0 0 15 14"><path d="M6 0.500h8v9h-3" fill="#DDA258"/><rect x="1" y="4.600" width="9" height="8" fill="#E4E6F0" stroke="#424242" stroke-width="1.200"/><path d="M1 5.500h9" stroke="#424242" stroke-width="1.600"/><path d="M2 2h3M3.500 0.500l1.500 1.500l-1.500 1.500" fill="none" stroke="#00539C" stroke-width="1.100"/><path d="M14 12h-3M12.500 10.500l-1.500 1.500l1.500 1.500" fill="none" stroke="#00539C" stroke-width="1.100"/></svg>
<svg style="position:absolute;left:1254.8px;top:143.5px;" width="6.4" height="3.4" viewBox="0 0 6.4 3.4"><path d="M0 0h6.400l-3.200 3.400z" fill="#1e1e1e"/></svg>
<div style="position:absolute;left:1267px;top:136px;width:1px;height:19px;background:#737E99;"></div>
<svg style="position:absolute;left:1278px;top:138px;" width="14" height="15" viewBox="0 0 14 15"><circle cx="8" cy="8.500" r="4.600" fill="#F4F5FA" stroke="#424242" stroke-width="1.200"/><path d="M8 5.500v3.200h2.500" fill="none" stroke="#424242" stroke-width="1.100"/><path d="M0 0.500h4l-2 2.500z" fill="#424242"/></svg>
<svg style="position:absolute;left:1297.8px;top:143.5px;" width="6.4" height="3.4" viewBox="0 0 6.4 3.4"><path d="M0 0h6.400l-3.200 3.400z" fill="#1e1e1e"/></svg>
<svg style="position:absolute;left:1313px;top:139px;" width="12" height="12" viewBox="0 0 12 12"><path d="M4 2.500v-2h7.500v7h-2" fill="none" stroke="#424242" stroke-width="1"/><path d="M2 4.500v-2h7.500v7h-2" fill="none" stroke="#424242" stroke-width="1"/><rect x="0.500" y="4.500" width="7" height="7" fill="#F4F5FA" stroke="#424242" stroke-width="1"/><path d="M2 8h4" stroke="#00539C" stroke-width="1.200"/></svg>
<div style="position:absolute;left:1349px;top:131px;width:10px;height:28px;background:#DDE1EC;"></div>
<svg style="position:absolute;left:1351px;top:135px;" width="6" height="5" viewBox="0 0 6 5"><path d="M0 0l2 2.500l-2 2.500zM3.500 0l2 2.500l-2 2.500z" fill="#1e1e1e"/></svg>
<svg style="position:absolute;left:1331px;top:163px;" width="13" height="13" viewBox="0 0 13 13"><circle cx="8.700" cy="4.300" r="3.100" fill="none" stroke="#717171" stroke-width="1.700"/><path d="M6.500 6.500l-5 5.500" stroke="#717171" stroke-width="2.200"/></svg>
<svg style="position:absolute;left:1348.8px;top:168.5px;" width="6.4" height="3.4" viewBox="0 0 6.4 3.4"><path d="M0 0h6.400l-3.200 3.400z" fill="#717171"/></svg>
<span class="t" style="left:1074px;top:648.3px;font-size:20px;line-height:28px;color:rgba(125,125,125,0.5);letter-spacing:-0.146px;">Activate Windows</span>
<span class="t" style="left:1074px;top:675.0px;font-size:14.5px;line-height:20px;color:rgba(120,120,120,0.55);letter-spacing:0.175px;">Go to Settings to activate Windows.</span>
<span class="t" dir="rtl" style="left:597.900px;top:659px;font-size:45px;line-height:70px;font-weight:700;color:rgb(205,205,205);opacity:0.420;-webkit-text-stroke:0.800px rgb(205,205,205);font-family:'DejaVu Sans',sans-serif;transform-origin:0 0;transform:scale(1.038,1.170);">مستقل</span>
<span class="t" style="left:600.8px;top:718.8px;font-size:28.5px;line-height:40px;color:rgba(200,200,205,0.320);letter-spacing:-1.072px;font-weight:700;">mostaql.com</span>
</div></body></html>
